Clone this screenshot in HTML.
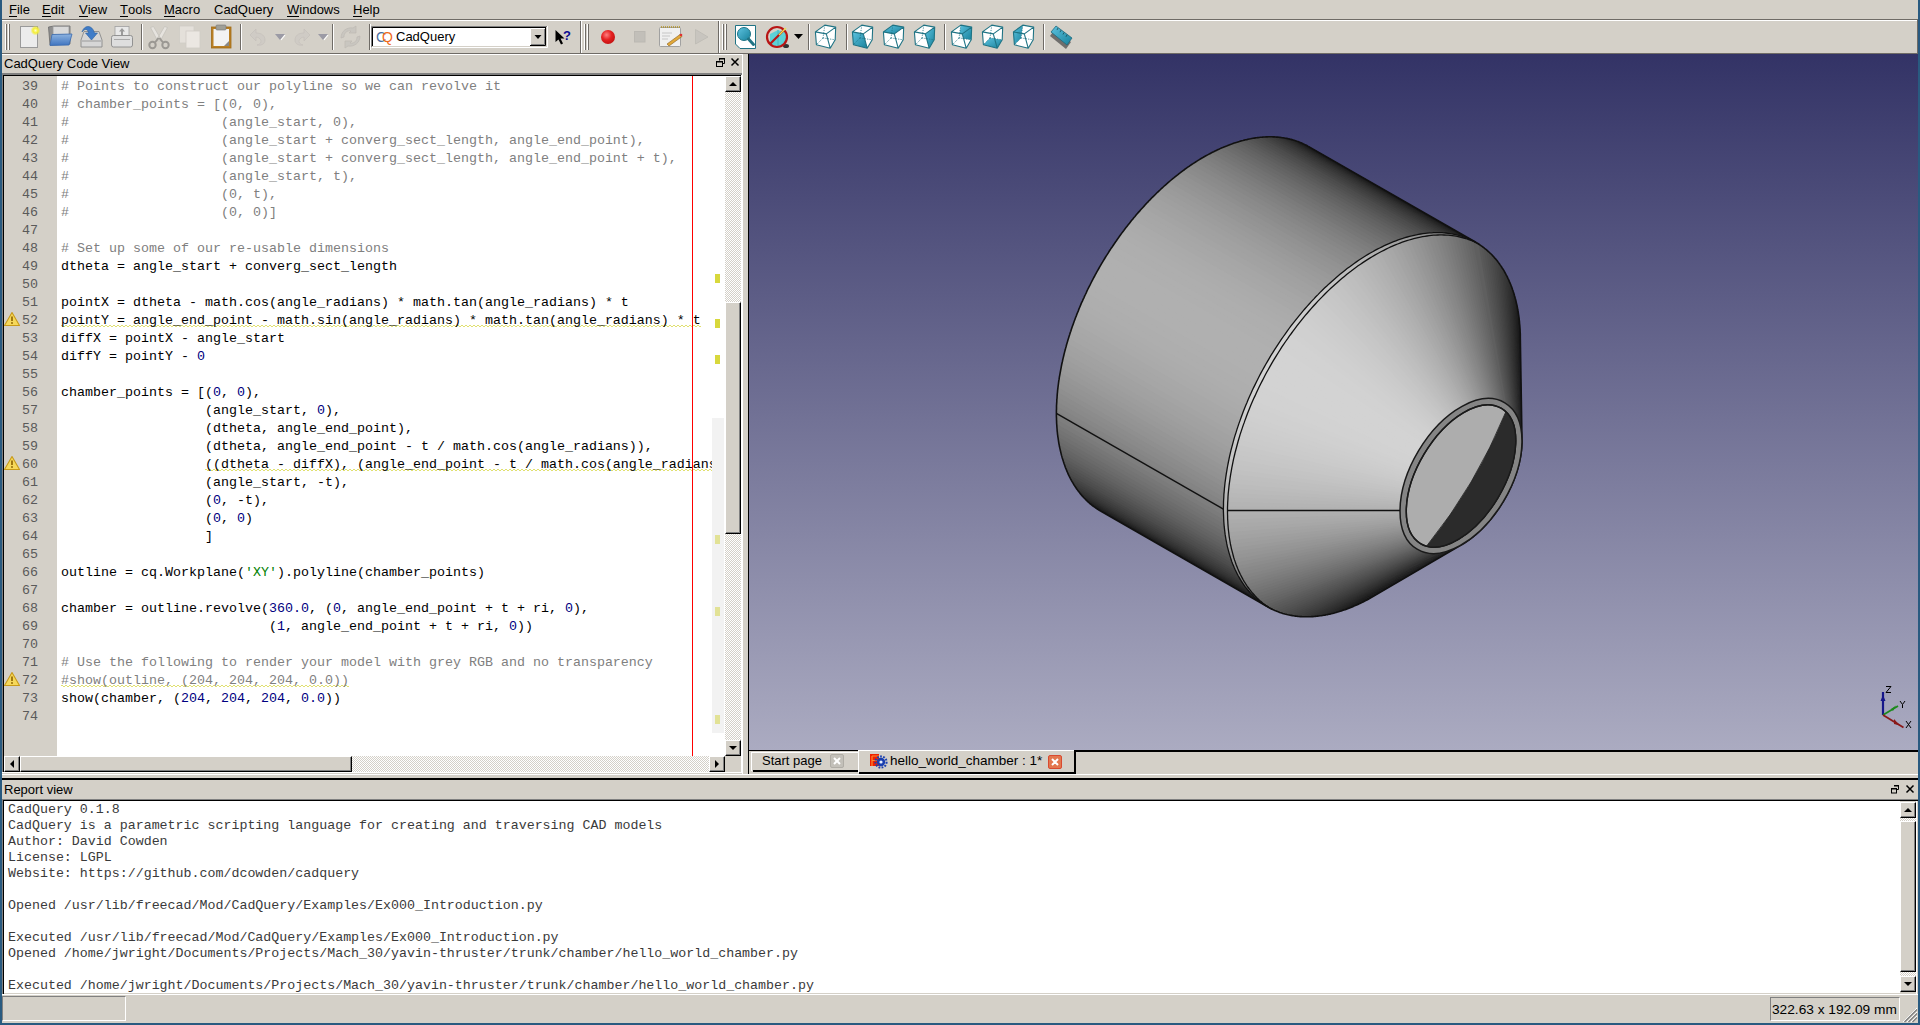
<!DOCTYPE html>
<html><head><meta charset="utf-8">
<style>
*{margin:0;padding:0;box-sizing:border-box}
html,body{width:1920px;height:1025px;overflow:hidden;background:#d4d0c8;font-family:"Liberation Sans",sans-serif;font-size:13px;color:#000;position:relative}
.a{position:absolute}
.menu span{position:absolute;top:2px;white-space:nowrap}
.menu u{text-decoration:none;display:inline-block;line-height:12px;border-bottom:1px solid #000}
.code{font-family:"Liberation Mono",monospace;font-size:13.33px;line-height:18px;white-space:pre}
.ln{position:absolute;left:4px;width:34px;text-align:right;color:#5a5a5a;font-family:"Liberation Mono",monospace;font-size:13.33px;line-height:18px}
.cm{color:#808080}.nu{color:#000080}.st{color:#008000}
.rep{font-family:"Liberation Mono",monospace;font-size:13.3px;line-height:16px;white-space:pre;color:#3a3a3a}
.checker{background-color:#d4d0c8;background-image:linear-gradient(45deg,#fff 25%,transparent 25%,transparent 75%,#fff 75%),linear-gradient(45deg,#fff 25%,transparent 25%,transparent 75%,#fff 75%);background-size:2px 2px;background-position:0 0,1px 1px}
.btn{position:absolute;background:#d4d0c8;border-top:1px solid #fff;border-left:1px solid #fff;border-right:1px solid #000;border-bottom:1px solid #000;box-shadow:inset -1px -1px 0 #808080}
</style></head><body>
<!-- window blue borders -->
<div class="a" style="left:0;top:0;width:2px;height:1025px;background:#295a80"></div>
<div class="a" style="left:1918px;top:0;width:2px;height:1025px;background:#295a80"></div>
<div class="a" style="left:0;top:1023px;width:1920px;height:2px;background:#295a80"></div>

<!-- menubar -->
<div class="menu">
<span style="left:9px"><u>F</u>ile</span>
<span style="left:42px"><u>E</u>dit</span>
<span style="left:79px"><u>V</u>iew</span>
<span style="left:120px"><u>T</u>ools</span>
<span style="left:164px"><u>M</u>acro</span>
<span style="left:214px">CadQuery</span>
<span style="left:287px"><u>W</u>indows</span>
<span style="left:353px"><u>H</u>elp</span>
</div>
<div class="a" style="left:2px;top:19px;width:1916px;height:1px;background:#6f6b66"></div>
<div class="a" style="left:2px;top:20px;width:1915px;height:1px;background:#fff"></div>
<div class="a" style="left:1917px;top:20px;width:1px;height:34px;background:#6f6b66"></div>
<div class="a" style="left:2px;top:53px;width:1916px;height:1px;background:#6f6b66"></div>

<!--TOOLBAR-->
<svg class="a" style="left:0;top:20px" width="1100" height="34" viewBox="0 20 1100 34">
<defs>
<linearGradient id="tealg" x1="0" y1="0" x2="1" y2="1"><stop offset="0" stop-color="#5ec3e0"/><stop offset="1" stop-color="#17819b"/></linearGradient>
<linearGradient id="blueg" x1="0" y1="0" x2="0" y2="1"><stop offset="0" stop-color="#8db3e0"/><stop offset="1" stop-color="#3f74c0"/></linearGradient>
<radialGradient id="redg" cx="0.4" cy="0.35" r="0.7"><stop offset="0" stop-color="#ff8080"/><stop offset="0.5" stop-color="#e52222"/><stop offset="1" stop-color="#c01010"/></radialGradient>
<radialGradient id="yelg"><stop offset="0" stop-color="#ffffc0"/><stop offset="0.5" stop-color="#f4ee30"/><stop offset="1" stop-color="#f4ee30" stop-opacity="0"/></radialGradient>
</defs>
<!-- handles -->
<g fill="none" stroke-width="1">
<path d="M5.5,24 V50 M8.5,24 V50" stroke="#fff"/><path d="M6.5,24 V50 M9.5,24 V50" stroke="#6f6b66"/>
<path d="M584.5,24 V50 M587.5,24 V50" stroke="#fff"/><path d="M585.5,24 V50 M588.5,24 V50" stroke="#6f6b66"/>
<path d="M722.5,24 V50 M725.5,24 V50" stroke="#fff"/><path d="M723.5,24 V50 M726.5,24 V50" stroke="#6f6b66"/>
</g>
<!-- separators -->
<g stroke-width="1">
<path d="M141.5,24 V50 M240.5,24 V50 M332.5,24 V50 M369.5,24 V50 M808.5,24 V50 M846.5,24 V50 M944.5,24 V50 M1043.5,24 V50" stroke="#6f6b66"/>
<path d="M142.5,24 V50 M241.5,24 V50 M333.5,24 V50 M370.5,24 V50 M809.5,24 V50 M847.5,24 V50 M945.5,24 V50 M1044.5,24 V50" stroke="#fff"/>
</g>
<!-- toolbar breaks -->
<path d="M580.5,21 V53 M718.5,21 V53" stroke="#6f6b66"/><path d="M581.5,21 V53 M719.5,21 V53" stroke="#fff"/>
<!-- new -->
<rect x="20.5" y="26.5" width="17" height="21" fill="#ececec" stroke="#9a9a9a"/>
<circle cx="35.5" cy="30.5" r="5" fill="url(#yelg)"/>
<!-- open -->
<path d="M48.5,27 L54,26 L70,26 L70,44 L50,45 Z" fill="#8f8f8f" stroke="#6a6a6a" stroke-width="0.8"/>
<rect x="53" y="26.5" width="16" height="8" fill="#d9d9d9" stroke="#9a9a9a" stroke-width="0.8"/>
<path d="M52,34.5 L72,34 L69,45 L50,45.5 Z" fill="url(#blueg)" stroke="#3a6bb0" stroke-width="0.8"/>
<!-- save -->
<path d="M81,40 L84,31.5 L99,31.5 L102,40 V47 H81 Z" fill="#d6d6d6" stroke="#8a8a8a" stroke-width="0.9"/>
<path d="M82,41 H101" stroke="#9a9a9a"/>
<path d="M82,32 C84,25 92,24 94.5,33 L97.5,33 L91.5,40 L85.5,33 L88.5,33 C88,29 85,28 82,32 Z" fill="#3f7cc8" stroke="#2c5f9e" stroke-width="0.6"/>
<!-- print/export -->
<rect x="115" y="26.5" width="14" height="10" fill="#e8e8e8" stroke="#a0a0a0" stroke-width="0.8"/>
<path d="M122,28 L125,31.5 H123 V35 H121 V31.5 H119 Z" fill="#9a9a9a"/>
<rect x="111.5" y="35.5" width="21" height="11.5" rx="2" fill="#dedede" stroke="#8a8a8a" stroke-width="0.9"/>
<path d="M114,39.5 H130" stroke="#a8a8a8"/>
<!-- cut (disabled) -->
<path d="M150.5,27.5 L153.5,26.5 L160.5,38.5 L158,41.5 Z M167.5,27.5 L164.5,26.5 L157.5,38.5 L160,41.5 Z" fill="#e6e3de" stroke="#c4c1bb" stroke-width="0.8"/>
<g stroke="#9b9893" fill="none" stroke-width="2"><circle cx="152.5" cy="45" r="3.2"/><circle cx="165.5" cy="45" r="3.2"/><path d="M155,42.5 L158.5,38 M163,42.5 L159.5,38"/></g>
<!-- copy (disabled) -->
<rect x="179.5" y="26" width="14.5" height="17" fill="#e4e0da" stroke="#d0ccc6" stroke-width="0.8"/>
<rect x="186" y="31" width="14" height="17" fill="#ebe7e2" stroke="#d0ccc6" stroke-width="0.8"/>
<!-- paste -->
<rect x="211.5" y="27" width="19.5" height="21" fill="#b97f23" stroke="#a06a15" stroke-width="0.8"/>
<rect x="213.5" y="29" width="15.5" height="17" fill="#f3f3f3"/>
<rect x="216" y="25" width="10" height="5" rx="1" fill="#9f9f98" stroke="#777" stroke-width="0.6"/>
<path d="M224,46 L229,41 V46 Z" fill="#888"/>
<!-- undo/redo disabled -->
<path d="M250,35 L256,29 V33 C262,33 265,36 265,40 C265,44 261,46 257,45 C261,44 262,41 260,39 C259,37.5 257,37 256,37 V41 Z" fill="#cfcbc5" stroke="#c2beb8" stroke-width="0.6"/>
<path d="M275,34 H285 L280,40 Z" fill="#9b9aa5"/><path d="M281,40 L285,35" stroke="#fff" stroke-width="1.2"/>
<path d="M310,35 L304,29 V33 C298,33 295,36 295,40 C295,44 299,46 303,45 C299,44 298,41 300,39 C301,37.5 303,37 304,37 V41 Z" fill="#cfcbc5" stroke="#c2beb8" stroke-width="0.6"/>
<path d="M318,34 H328 L323,40 Z" fill="#9b9aa5"/><path d="M324,40 L328,35" stroke="#fff" stroke-width="1.2"/>
<!-- refresh disabled -->
<path d="M341,38 C341,31 347,27 353,28 L356,26 V33 H349 L351,31 C347,30 344,33 344,37 Z M360,36 C360,43 354,47 348,46 L345,48 V41 H352 L350,43 C354,44 357,41 357,37 Z" fill="#c9c6c0" stroke="#bdb9b3" stroke-width="0.7"/>
<!-- combo -->
<path d="M371.5,47 V26.5 H547" stroke="#808080" fill="none"/>
<path d="M372.5,46 V27.5 H546" stroke="#000" fill="none"/>
<path d="M372,47.5 H547.5 V26" stroke="#fff" fill="none"/>
<rect x="373" y="28" width="173" height="18" fill="#fff"/>
<rect x="530" y="28" width="16" height="18" fill="#d4d0c8"/>
<path d="M530.5,46 V28.5 H545" stroke="#fff" fill="none"/>
<path d="M530,45.5 H545.5 V28" stroke="#000" fill="none"/>
<path d="M531,44.5 H544.5 V29" stroke="#808080" fill="none"/>
<path d="M534.5,35 H541.5 L538,39 Z" fill="#000"/>
<text x="376" y="42" font-family="Liberation Sans" font-size="14" fill="#4d6fa0">C</text>
<text x="382" y="42" font-family="Liberation Sans" font-size="14" fill="#f06a1a">Q</text>
<!-- whats this -->
<path d="M555.5,30 V42 L558.5,39.5 L561,44.5 L563,43.5 L560.5,38.5 L564.5,38.5 Z" fill="#000"/>
<text x="563" y="40" font-family="Liberation Sans" font-weight="bold" font-size="13" fill="#0a0a90">?</text>
<!-- record -->
<circle cx="608" cy="37" r="7" fill="url(#redg)"/>
<!-- stop disabled -->
<rect x="634.5" y="31.5" width="10.5" height="10.5" fill="#c2bfb9" stroke="#bbb8b2"/>
<!-- macro edit -->
<rect x="659.5" y="27.5" width="21" height="19" rx="1" fill="#f0f0f0" stroke="#9a9a9a" stroke-width="0.9"/>
<path d="M661,27 H680" stroke="#b09020" stroke-width="1.5" stroke-dasharray="1,1"/>
<path d="M662,33 H672 M662,36 H670 M662,39 H668" stroke="#bbb" stroke-width="0.8"/>
<path d="M667,44 L680,34.5 L682,36.5 L669,46 Z" fill="#e2a93a" stroke="#8a6020" stroke-width="0.6"/>
<circle cx="681" cy="35" r="1.3" fill="#e03030"/>
<!-- play disabled -->
<path d="M695.5,29.5 L708,37 L695.5,44 Z" fill="#c8c5bf" stroke="#bdbab4" stroke-width="0.8"/>
<!-- fit all -->
<path d="M735.5,25.5 H755.5 V48.5 H740 L735.5,44 Z" fill="#fff" stroke="#1f7384" stroke-width="1"/>
<circle cx="744" cy="34" r="6.5" fill="url(#tealg)" stroke="#1f7384" stroke-width="1"/>
<path d="M748.5,39 L753.5,44.5" stroke="#1f7384" stroke-width="3" stroke-linecap="round"/>
<!-- draw style -->
<path d="M770,34 L778,30 L786,33 V44 L778,47 L770,44 Z" fill="#4fd0d8" opacity="0.9"/>
<path d="M778,30 V47" stroke="#3ab0b8" stroke-width="0.8"/>
<ellipse cx="786" cy="46" rx="3" ry="2" fill="#333"/>
<circle cx="777" cy="37" r="10" fill="none" stroke="#b81515" stroke-width="2.2"/>
<path d="M770,44 L784,30" stroke="#b81515" stroke-width="2.2"/>
<path d="M779,35 L786,28" stroke="#f0e050" stroke-width="1.4"/>
<path d="M794,34 H803 L798.5,39 Z" fill="#000"/>
<!-- cubes -->
<g transform="translate(815,25)"><path d="M0.4,6.9 L9.8,0.1 L20.7,2.1 L11.3,8.9 Z M0.4,6.9 L1.4,19.8 L15.2,23.2 L11.3,8.9 Z M11.3,8.9 L20.7,2.1 L20.2,14.8 L15.2,23.2 Z" fill="#fff"/><g fill="none" stroke="#1f7384" stroke-width="1.1" stroke-linejoin="round">
 <path d="M0.4,6.9 L9.8,0.1 L20.7,2.1 L11.3,8.9 Z M0.4,6.9 L1.4,19.8 L15.2,23.2 L11.3,8.9 M15.2,23.2 L20.2,14.8 L20.7,2.1"/>
 <path d="M9.8,0.1 L8,13 M8,13 L1.4,19.8 M8,13 L20.2,14.8" stroke-dasharray="1.2,1.2" stroke-width="0.8"/>
</g></g>
<g transform="translate(852,25)"><path d="M0.4,6.9 L9.8,0.1 L20.7,2.1 L11.3,8.9 Z M11.3,8.9 L20.7,2.1 L20.2,14.8 L15.2,23.2 Z" fill="#fff"/><path d="M0.4,6.9 L1.4,19.8 L15.2,23.2 L11.3,8.9 Z" fill="url(#tealg)"/><g fill="none" stroke="#1f7384" stroke-width="1.1" stroke-linejoin="round">
 <path d="M0.4,6.9 L9.8,0.1 L20.7,2.1 L11.3,8.9 Z M0.4,6.9 L1.4,19.8 L15.2,23.2 L11.3,8.9 M15.2,23.2 L20.2,14.8 L20.7,2.1"/>
 <path d="M9.8,0.1 L8,13 M8,13 L1.4,19.8 M8,13 L20.2,14.8" stroke-dasharray="1.2,1.2" stroke-width="0.8"/>
</g></g>
<g transform="translate(883,25)"><path d="M0.4,6.9 L1.4,19.8 L15.2,23.2 L11.3,8.9 Z M11.3,8.9 L20.7,2.1 L20.2,14.8 L15.2,23.2 Z" fill="#fff"/><path d="M0.4,6.9 L9.8,0.1 L20.7,2.1 L11.3,8.9 Z" fill="url(#tealg)"/><g fill="none" stroke="#1f7384" stroke-width="1.1" stroke-linejoin="round">
 <path d="M0.4,6.9 L9.8,0.1 L20.7,2.1 L11.3,8.9 Z M0.4,6.9 L1.4,19.8 L15.2,23.2 L11.3,8.9 M15.2,23.2 L20.2,14.8 L20.7,2.1"/>
 <path d="M9.8,0.1 L8,13 M8,13 L1.4,19.8 M8,13 L20.2,14.8" stroke-dasharray="1.2,1.2" stroke-width="0.8"/>
</g></g>
<g transform="translate(914,25)"><path d="M0.4,6.9 L9.8,0.1 L20.7,2.1 L11.3,8.9 Z M0.4,6.9 L1.4,19.8 L15.2,23.2 L11.3,8.9 Z" fill="#fff"/><path d="M11.3,8.9 L20.7,2.1 L20.2,14.8 L15.2,23.2 Z" fill="url(#tealg)"/><g fill="none" stroke="#1f7384" stroke-width="1.1" stroke-linejoin="round">
 <path d="M0.4,6.9 L9.8,0.1 L20.7,2.1 L11.3,8.9 Z M0.4,6.9 L1.4,19.8 L15.2,23.2 L11.3,8.9 M15.2,23.2 L20.2,14.8 L20.7,2.1"/>
 <path d="M9.8,0.1 L8,13 M8,13 L1.4,19.8 M8,13 L20.2,14.8" stroke-dasharray="1.2,1.2" stroke-width="0.8"/>
</g></g>
<g transform="translate(951,25)"><path d="M0.4,6.9 L9.8,0.1 L20.7,2.1 L11.3,8.9 Z M0.4,6.9 L1.4,19.8 L15.2,23.2 L11.3,8.9 Z M11.3,8.9 L20.7,2.1 L20.2,14.8 L15.2,23.2 Z" fill="#fff"/><path d="M9.8,0.1 L20.7,2.1 L20.2,14.8 L8,13 Z" fill="url(#tealg)"/><path d="M0.4,6.9 L1.4,19.8 L15.2,23.2 L11.3,8.9 Z" fill="#fff" opacity="0.85"/><g fill="none" stroke="#1f7384" stroke-width="1.1" stroke-linejoin="round">
 <path d="M0.4,6.9 L9.8,0.1 L20.7,2.1 L11.3,8.9 Z M0.4,6.9 L1.4,19.8 L15.2,23.2 L11.3,8.9 M15.2,23.2 L20.2,14.8 L20.7,2.1"/>
 <path d="M9.8,0.1 L8,13 M8,13 L1.4,19.8 M8,13 L20.2,14.8" stroke-dasharray="1.2,1.2" stroke-width="0.8"/>
</g></g>
<g transform="translate(982,25)"><path d="M0.4,6.9 L9.8,0.1 L20.7,2.1 L11.3,8.9 Z M0.4,6.9 L1.4,19.8 L15.2,23.2 L11.3,8.9 Z M11.3,8.9 L20.7,2.1 L20.2,14.8 L15.2,23.2 Z" fill="#fff"/><path d="M1.4,19.8 L8,13 L20.2,14.8 L15.2,23.2 Z" fill="url(#tealg)"/><g fill="none" stroke="#1f7384" stroke-width="1.1" stroke-linejoin="round">
 <path d="M0.4,6.9 L9.8,0.1 L20.7,2.1 L11.3,8.9 Z M0.4,6.9 L1.4,19.8 L15.2,23.2 L11.3,8.9 M15.2,23.2 L20.2,14.8 L20.7,2.1"/>
 <path d="M9.8,0.1 L8,13 M8,13 L1.4,19.8 M8,13 L20.2,14.8" stroke-dasharray="1.2,1.2" stroke-width="0.8"/>
</g></g>
<g transform="translate(1013,25)"><path d="M0.4,6.9 L9.8,0.1 L20.7,2.1 L11.3,8.9 Z M0.4,6.9 L1.4,19.8 L15.2,23.2 L11.3,8.9 Z M11.3,8.9 L20.7,2.1 L20.2,14.8 L15.2,23.2 Z" fill="#fff"/><path d="M0.4,6.9 L9.8,0.1 L8,13 L1.4,19.8 Z" fill="url(#tealg)"/><g fill="none" stroke="#1f7384" stroke-width="1.1" stroke-linejoin="round">
 <path d="M0.4,6.9 L9.8,0.1 L20.7,2.1 L11.3,8.9 Z M0.4,6.9 L1.4,19.8 L15.2,23.2 L11.3,8.9 M15.2,23.2 L20.2,14.8 L20.7,2.1"/>
 <path d="M9.8,0.1 L8,13 M8,13 L1.4,19.8 M8,13 L20.2,14.8" stroke-dasharray="1.2,1.2" stroke-width="0.8"/>
</g></g>
<!-- ruler -->
<path d="M1051,34 L1056,27 L1072,40 L1067,47 Z" fill="#555" transform="translate(-1,2)" opacity="0.8"/>
<path d="M1051,32 L1056,26 L1072,38 L1067,45 Z" fill="url(#tealg)" stroke="#1f6a7c" stroke-width="0.8"/>
<path d="M1058,28 L1057,30 M1061,30.2 L1060,32.2 M1064,32.5 L1063,34.5 M1067,34.8 L1066,36.8" stroke="#1a4a55" stroke-width="0.8"/>
</svg>
<!--/TOOLBAR-->
<div id="combotxt" class="a" style="left:396px;top:29px;white-space:nowrap;font-size:13px">CadQuery</div>
<!-- dock: code view -->
<div class="a" style="left:2px;top:54px;width:741px;height:1px;background:#fff"></div><div class="a" style="left:742px;top:54px;width:1px;height:720px;background:#fff"></div>
<div class="a" style="left:4px;top:56px;white-space:nowrap">CadQuery Code View</div>
<div class="a" style="left:2px;top:73px;width:740px;height:2px;background:#808080"></div>
<div class="a" style="left:3px;top:75px;width:739px;height:1px;background:#000"></div>
<div class="a" style="left:2px;top:75px;width:1px;height:698px;background:#808080"></div>
<div class="a" style="left:3px;top:75px;width:1px;height:697px;background:#000"></div>
<!-- gutter -->
<div class="a" style="left:4px;top:76px;width:53px;height:680px;background:#d4d0c8"></div>
<div class="a" style="left:57px;top:76px;width:668px;height:680px;background:#fff"></div>

<!-- wavy underlines -->
<svg class="a" style="left:0;top:0" width="750" height="780" viewBox="0 0 750 780">
<path d="M61.0,326.0 Q62.0,324.0 63.0,326.0 Q64.0,328.0 65.0,326.0 Q66.0,324.0 67.0,326.0 Q68.0,328.0 69.0,326.0 Q70.0,324.0 71.0,326.0 Q72.0,328.0 73.0,326.0 Q74.0,324.0 75.0,326.0 Q76.0,328.0 77.0,326.0 Q78.0,324.0 79.0,326.0 Q80.0,328.0 81.0,326.0 Q82.0,324.0 83.0,326.0 Q84.0,328.0 85.0,326.0 Q86.0,324.0 87.0,326.0 Q88.0,328.0 89.0,326.0 Q90.0,324.0 91.0,326.0 Q92.0,328.0 93.0,326.0 Q94.0,324.0 95.0,326.0 Q96.0,328.0 97.0,326.0 Q98.0,324.0 99.0,326.0 Q100.0,328.0 101.0,326.0 Q102.0,324.0 103.0,326.0 Q104.0,328.0 105.0,326.0 Q106.0,324.0 107.0,326.0 Q108.0,328.0 109.0,326.0 Q110.0,324.0 111.0,326.0 Q112.0,328.0 113.0,326.0 Q114.0,324.0 115.0,326.0 Q116.0,328.0 117.0,326.0 Q118.0,324.0 119.0,326.0 Q120.0,328.0 121.0,326.0 Q122.0,324.0 123.0,326.0 Q124.0,328.0 125.0,326.0 Q126.0,324.0 127.0,326.0 Q128.0,328.0 129.0,326.0 Q130.0,324.0 131.0,326.0 Q132.0,328.0 133.0,326.0 Q134.0,324.0 135.0,326.0 Q136.0,328.0 137.0,326.0 Q138.0,324.0 139.0,326.0 Q140.0,328.0 141.0,326.0 Q142.0,324.0 143.0,326.0 Q144.0,328.0 145.0,326.0 Q146.0,324.0 147.0,326.0 Q148.0,328.0 149.0,326.0 Q150.0,324.0 151.0,326.0 Q152.0,328.0 153.0,326.0 Q154.0,324.0 155.0,326.0 Q156.0,328.0 157.0,326.0 Q158.0,324.0 159.0,326.0 Q160.0,328.0 161.0,326.0 Q162.0,324.0 163.0,326.0 Q164.0,328.0 165.0,326.0 Q166.0,324.0 167.0,326.0 Q168.0,328.0 169.0,326.0 Q170.0,324.0 171.0,326.0 Q172.0,328.0 173.0,326.0 Q174.0,324.0 175.0,326.0 Q176.0,328.0 177.0,326.0 Q178.0,324.0 179.0,326.0 Q180.0,328.0 181.0,326.0 Q182.0,324.0 183.0,326.0 Q184.0,328.0 185.0,326.0 Q186.0,324.0 187.0,326.0 Q188.0,328.0 189.0,326.0 Q190.0,324.0 191.0,326.0 Q192.0,328.0 193.0,326.0 Q194.0,324.0 195.0,326.0 Q196.0,328.0 197.0,326.0 Q198.0,324.0 199.0,326.0 Q200.0,328.0 201.0,326.0 Q202.0,324.0 203.0,326.0 Q204.0,328.0 205.0,326.0 Q206.0,324.0 207.0,326.0 Q208.0,328.0 209.0,326.0 Q210.0,324.0 211.0,326.0 Q212.0,328.0 213.0,326.0 Q214.0,324.0 215.0,326.0 Q216.0,328.0 217.0,326.0 Q218.0,324.0 219.0,326.0 Q220.0,328.0 221.0,326.0 Q222.0,324.0 223.0,326.0 Q224.0,328.0 225.0,326.0 Q226.0,324.0 227.0,326.0 Q228.0,328.0 229.0,326.0 Q230.0,324.0 231.0,326.0 Q232.0,328.0 233.0,326.0 Q234.0,324.0 235.0,326.0 Q236.0,328.0 237.0,326.0 Q238.0,324.0 239.0,326.0 Q240.0,328.0 241.0,326.0 Q242.0,324.0 243.0,326.0 Q244.0,328.0 245.0,326.0 Q246.0,324.0 247.0,326.0 Q248.0,328.0 249.0,326.0 Q250.0,324.0 251.0,326.0 Q252.0,328.0 253.0,326.0 Q254.0,324.0 255.0,326.0 Q256.0,328.0 257.0,326.0 Q258.0,324.0 259.0,326.0 Q260.0,328.0 261.0,326.0 Q262.0,324.0 263.0,326.0 Q264.0,328.0 265.0,326.0 Q266.0,324.0 267.0,326.0 Q268.0,328.0 269.0,326.0 Q270.0,324.0 271.0,326.0 Q272.0,328.0 273.0,326.0 Q274.0,324.0 275.0,326.0 Q276.0,328.0 277.0,326.0 Q278.0,324.0 279.0,326.0 Q280.0,328.0 281.0,326.0 Q282.0,324.0 283.0,326.0 Q284.0,328.0 285.0,326.0 Q286.0,324.0 287.0,326.0 Q288.0,328.0 289.0,326.0 Q290.0,324.0 291.0,326.0 Q292.0,328.0 293.0,326.0 Q294.0,324.0 295.0,326.0 Q296.0,328.0 297.0,326.0 Q298.0,324.0 299.0,326.0 Q300.0,328.0 301.0,326.0 Q302.0,324.0 303.0,326.0 Q304.0,328.0 305.0,326.0 Q306.0,324.0 307.0,326.0 Q308.0,328.0 309.0,326.0 Q310.0,324.0 311.0,326.0 Q312.0,328.0 313.0,326.0 Q314.0,324.0 315.0,326.0 Q316.0,328.0 317.0,326.0 Q318.0,324.0 319.0,326.0 Q320.0,328.0 321.0,326.0 Q322.0,324.0 323.0,326.0 Q324.0,328.0 325.0,326.0 Q326.0,324.0 327.0,326.0 Q328.0,328.0 329.0,326.0 Q330.0,324.0 331.0,326.0 Q332.0,328.0 333.0,326.0 Q334.0,324.0 335.0,326.0 Q336.0,328.0 337.0,326.0 Q338.0,324.0 339.0,326.0 Q340.0,328.0 341.0,326.0 Q342.0,324.0 343.0,326.0 Q344.0,328.0 345.0,326.0 Q346.0,324.0 347.0,326.0 Q348.0,328.0 349.0,326.0 Q350.0,324.0 351.0,326.0 Q352.0,328.0 353.0,326.0 Q354.0,324.0 355.0,326.0 Q356.0,328.0 357.0,326.0 Q358.0,324.0 359.0,326.0 Q360.0,328.0 361.0,326.0 Q362.0,324.0 363.0,326.0 Q364.0,328.0 365.0,326.0 Q366.0,324.0 367.0,326.0 Q368.0,328.0 369.0,326.0 Q370.0,324.0 371.0,326.0 Q372.0,328.0 373.0,326.0 Q374.0,324.0 375.0,326.0 Q376.0,328.0 377.0,326.0 Q378.0,324.0 379.0,326.0 Q380.0,328.0 381.0,326.0 Q382.0,324.0 383.0,326.0 Q384.0,328.0 385.0,326.0 Q386.0,324.0 387.0,326.0 Q388.0,328.0 389.0,326.0 Q390.0,324.0 391.0,326.0 Q392.0,328.0 393.0,326.0 Q394.0,324.0 395.0,326.0 Q396.0,328.0 397.0,326.0 Q398.0,324.0 399.0,326.0 Q400.0,328.0 401.0,326.0 Q402.0,324.0 403.0,326.0 Q404.0,328.0 405.0,326.0 Q406.0,324.0 407.0,326.0 Q408.0,328.0 409.0,326.0 Q410.0,324.0 411.0,326.0 Q412.0,328.0 413.0,326.0 Q414.0,324.0 415.0,326.0 Q416.0,328.0 417.0,326.0 Q418.0,324.0 419.0,326.0 Q420.0,328.0 421.0,326.0 Q422.0,324.0 423.0,326.0 Q424.0,328.0 425.0,326.0 Q426.0,324.0 427.0,326.0 Q428.0,328.0 429.0,326.0 Q430.0,324.0 431.0,326.0 Q432.0,328.0 433.0,326.0 Q434.0,324.0 435.0,326.0 Q436.0,328.0 437.0,326.0 Q438.0,324.0 439.0,326.0 Q440.0,328.0 441.0,326.0 Q442.0,324.0 443.0,326.0 Q444.0,328.0 445.0,326.0 Q446.0,324.0 447.0,326.0 Q448.0,328.0 449.0,326.0 Q450.0,324.0 451.0,326.0 Q452.0,328.0 453.0,326.0 Q454.0,324.0 455.0,326.0 Q456.0,328.0 457.0,326.0 Q458.0,324.0 459.0,326.0 Q460.0,328.0 461.0,326.0 Q462.0,324.0 463.0,326.0 Q464.0,328.0 465.0,326.0 Q466.0,324.0 467.0,326.0 Q468.0,328.0 469.0,326.0 Q470.0,324.0 471.0,326.0 Q472.0,328.0 473.0,326.0 Q474.0,324.0 475.0,326.0 Q476.0,328.0 477.0,326.0 Q478.0,324.0 479.0,326.0 Q480.0,328.0 481.0,326.0 Q482.0,324.0 483.0,326.0 Q484.0,328.0 485.0,326.0 Q486.0,324.0 487.0,326.0 Q488.0,328.0 489.0,326.0 Q490.0,324.0 491.0,326.0 Q492.0,328.0 493.0,326.0 Q494.0,324.0 495.0,326.0 Q496.0,328.0 497.0,326.0 Q498.0,324.0 499.0,326.0 Q500.0,328.0 501.0,326.0 Q502.0,324.0 503.0,326.0 Q504.0,328.0 505.0,326.0 Q506.0,324.0 507.0,326.0 Q508.0,328.0 509.0,326.0 Q510.0,324.0 511.0,326.0 Q512.0,328.0 513.0,326.0 Q514.0,324.0 515.0,326.0 Q516.0,328.0 517.0,326.0 Q518.0,324.0 519.0,326.0 Q520.0,328.0 521.0,326.0 Q522.0,324.0 523.0,326.0 Q524.0,328.0 525.0,326.0 Q526.0,324.0 527.0,326.0 Q528.0,328.0 529.0,326.0 Q530.0,324.0 531.0,326.0 Q532.0,328.0 533.0,326.0 Q534.0,324.0 535.0,326.0 Q536.0,328.0 537.0,326.0 Q538.0,324.0 539.0,326.0 Q540.0,328.0 541.0,326.0 Q542.0,324.0 543.0,326.0 Q544.0,328.0 545.0,326.0 Q546.0,324.0 547.0,326.0 Q548.0,328.0 549.0,326.0 Q550.0,324.0 551.0,326.0 Q552.0,328.0 553.0,326.0 Q554.0,324.0 555.0,326.0 Q556.0,328.0 557.0,326.0 Q558.0,324.0 559.0,326.0 Q560.0,328.0 561.0,326.0 Q562.0,324.0 563.0,326.0 Q564.0,328.0 565.0,326.0 Q566.0,324.0 567.0,326.0 Q568.0,328.0 569.0,326.0 Q570.0,324.0 571.0,326.0 Q572.0,328.0 573.0,326.0 Q574.0,324.0 575.0,326.0 Q576.0,328.0 577.0,326.0 Q578.0,324.0 579.0,326.0 Q580.0,328.0 581.0,326.0 Q582.0,324.0 583.0,326.0 Q584.0,328.0 585.0,326.0 Q586.0,324.0 587.0,326.0 Q588.0,328.0 589.0,326.0 Q590.0,324.0 591.0,326.0 Q592.0,328.0 593.0,326.0 Q594.0,324.0 595.0,326.0 Q596.0,328.0 597.0,326.0 Q598.0,324.0 599.0,326.0 Q600.0,328.0 601.0,326.0 Q602.0,324.0 603.0,326.0 Q604.0,328.0 605.0,326.0 Q606.0,324.0 607.0,326.0 Q608.0,328.0 609.0,326.0 Q610.0,324.0 611.0,326.0 Q612.0,328.0 613.0,326.0 Q614.0,324.0 615.0,326.0 Q616.0,328.0 617.0,326.0 Q618.0,324.0 619.0,326.0 Q620.0,328.0 621.0,326.0 Q622.0,324.0 623.0,326.0 Q624.0,328.0 625.0,326.0 Q626.0,324.0 627.0,326.0 Q628.0,328.0 629.0,326.0 Q630.0,324.0 631.0,326.0 Q632.0,328.0 633.0,326.0 Q634.0,324.0 635.0,326.0 Q636.0,328.0 637.0,326.0 Q638.0,324.0 639.0,326.0 Q640.0,328.0 641.0,326.0 Q642.0,324.0 643.0,326.0 Q644.0,328.0 645.0,326.0 Q646.0,324.0 647.0,326.0 Q648.0,328.0 649.0,326.0 Q650.0,324.0 651.0,326.0 Q652.0,328.0 653.0,326.0 Q654.0,324.0 655.0,326.0 Q656.0,328.0 657.0,326.0 Q658.0,324.0 659.0,326.0 Q660.0,328.0 661.0,326.0 Q662.0,324.0 663.0,326.0 Q664.0,328.0 665.0,326.0 Q666.0,324.0 667.0,326.0 Q668.0,328.0 669.0,326.0 Q670.0,324.0 671.0,326.0 Q672.0,328.0 673.0,326.0 Q674.0,324.0 675.0,326.0 Q676.0,328.0 677.0,326.0 Q678.0,324.0 679.0,326.0 Q680.0,328.0 681.0,326.0 Q682.0,324.0 683.0,326.0 Q684.0,328.0 685.0,326.0 Q686.0,324.0 687.0,326.0 Q688.0,328.0 689.0,326.0 Q690.0,324.0 691.0,326.0 Q692.0,328.0 693.0,326.0 Q694.0,324.0 695.0,326.0 Q696.0,328.0 697.0,326.0 Q698.0,324.0 699.0,326.0 Q700.0,328.0 701.0,326.0" fill="none" stroke="#e0e070" stroke-width="1"/>
<path d="M205.0,470.0 Q206.0,468.0 207.0,470.0 Q208.0,472.0 209.0,470.0 Q210.0,468.0 211.0,470.0 Q212.0,472.0 213.0,470.0 Q214.0,468.0 215.0,470.0 Q216.0,472.0 217.0,470.0 Q218.0,468.0 219.0,470.0 Q220.0,472.0 221.0,470.0 Q222.0,468.0 223.0,470.0 Q224.0,472.0 225.0,470.0 Q226.0,468.0 227.0,470.0 Q228.0,472.0 229.0,470.0 Q230.0,468.0 231.0,470.0 Q232.0,472.0 233.0,470.0 Q234.0,468.0 235.0,470.0 Q236.0,472.0 237.0,470.0 Q238.0,468.0 239.0,470.0 Q240.0,472.0 241.0,470.0 Q242.0,468.0 243.0,470.0 Q244.0,472.0 245.0,470.0 Q246.0,468.0 247.0,470.0 Q248.0,472.0 249.0,470.0 Q250.0,468.0 251.0,470.0 Q252.0,472.0 253.0,470.0 Q254.0,468.0 255.0,470.0 Q256.0,472.0 257.0,470.0 Q258.0,468.0 259.0,470.0 Q260.0,472.0 261.0,470.0 Q262.0,468.0 263.0,470.0 Q264.0,472.0 265.0,470.0 Q266.0,468.0 267.0,470.0 Q268.0,472.0 269.0,470.0 Q270.0,468.0 271.0,470.0 Q272.0,472.0 273.0,470.0 Q274.0,468.0 275.0,470.0 Q276.0,472.0 277.0,470.0 Q278.0,468.0 279.0,470.0 Q280.0,472.0 281.0,470.0 Q282.0,468.0 283.0,470.0 Q284.0,472.0 285.0,470.0 Q286.0,468.0 287.0,470.0 Q288.0,472.0 289.0,470.0 Q290.0,468.0 291.0,470.0 Q292.0,472.0 293.0,470.0 Q294.0,468.0 295.0,470.0 Q296.0,472.0 297.0,470.0 Q298.0,468.0 299.0,470.0 Q300.0,472.0 301.0,470.0 Q302.0,468.0 303.0,470.0 Q304.0,472.0 305.0,470.0 Q306.0,468.0 307.0,470.0 Q308.0,472.0 309.0,470.0 Q310.0,468.0 311.0,470.0 Q312.0,472.0 313.0,470.0 Q314.0,468.0 315.0,470.0 Q316.0,472.0 317.0,470.0 Q318.0,468.0 319.0,470.0 Q320.0,472.0 321.0,470.0 Q322.0,468.0 323.0,470.0 Q324.0,472.0 325.0,470.0 Q326.0,468.0 327.0,470.0 Q328.0,472.0 329.0,470.0 Q330.0,468.0 331.0,470.0 Q332.0,472.0 333.0,470.0 Q334.0,468.0 335.0,470.0 Q336.0,472.0 337.0,470.0 Q338.0,468.0 339.0,470.0 Q340.0,472.0 341.0,470.0 Q342.0,468.0 343.0,470.0 Q344.0,472.0 345.0,470.0 Q346.0,468.0 347.0,470.0 Q348.0,472.0 349.0,470.0 Q350.0,468.0 351.0,470.0 Q352.0,472.0 353.0,470.0 Q354.0,468.0 355.0,470.0 Q356.0,472.0 357.0,470.0 Q358.0,468.0 359.0,470.0 Q360.0,472.0 361.0,470.0 Q362.0,468.0 363.0,470.0 Q364.0,472.0 365.0,470.0 Q366.0,468.0 367.0,470.0 Q368.0,472.0 369.0,470.0 Q370.0,468.0 371.0,470.0 Q372.0,472.0 373.0,470.0 Q374.0,468.0 375.0,470.0 Q376.0,472.0 377.0,470.0 Q378.0,468.0 379.0,470.0 Q380.0,472.0 381.0,470.0 Q382.0,468.0 383.0,470.0 Q384.0,472.0 385.0,470.0 Q386.0,468.0 387.0,470.0 Q388.0,472.0 389.0,470.0 Q390.0,468.0 391.0,470.0 Q392.0,472.0 393.0,470.0 Q394.0,468.0 395.0,470.0 Q396.0,472.0 397.0,470.0 Q398.0,468.0 399.0,470.0 Q400.0,472.0 401.0,470.0 Q402.0,468.0 403.0,470.0 Q404.0,472.0 405.0,470.0 Q406.0,468.0 407.0,470.0 Q408.0,472.0 409.0,470.0 Q410.0,468.0 411.0,470.0 Q412.0,472.0 413.0,470.0 Q414.0,468.0 415.0,470.0 Q416.0,472.0 417.0,470.0 Q418.0,468.0 419.0,470.0 Q420.0,472.0 421.0,470.0 Q422.0,468.0 423.0,470.0 Q424.0,472.0 425.0,470.0 Q426.0,468.0 427.0,470.0 Q428.0,472.0 429.0,470.0 Q430.0,468.0 431.0,470.0 Q432.0,472.0 433.0,470.0 Q434.0,468.0 435.0,470.0 Q436.0,472.0 437.0,470.0 Q438.0,468.0 439.0,470.0 Q440.0,472.0 441.0,470.0 Q442.0,468.0 443.0,470.0 Q444.0,472.0 445.0,470.0 Q446.0,468.0 447.0,470.0 Q448.0,472.0 449.0,470.0 Q450.0,468.0 451.0,470.0 Q452.0,472.0 453.0,470.0 Q454.0,468.0 455.0,470.0 Q456.0,472.0 457.0,470.0 Q458.0,468.0 459.0,470.0 Q460.0,472.0 461.0,470.0 Q462.0,468.0 463.0,470.0 Q464.0,472.0 465.0,470.0 Q466.0,468.0 467.0,470.0 Q468.0,472.0 469.0,470.0 Q470.0,468.0 471.0,470.0 Q472.0,472.0 473.0,470.0 Q474.0,468.0 475.0,470.0 Q476.0,472.0 477.0,470.0 Q478.0,468.0 479.0,470.0 Q480.0,472.0 481.0,470.0 Q482.0,468.0 483.0,470.0 Q484.0,472.0 485.0,470.0 Q486.0,468.0 487.0,470.0 Q488.0,472.0 489.0,470.0 Q490.0,468.0 491.0,470.0 Q492.0,472.0 493.0,470.0 Q494.0,468.0 495.0,470.0 Q496.0,472.0 497.0,470.0 Q498.0,468.0 499.0,470.0 Q500.0,472.0 501.0,470.0 Q502.0,468.0 503.0,470.0 Q504.0,472.0 505.0,470.0 Q506.0,468.0 507.0,470.0 Q508.0,472.0 509.0,470.0 Q510.0,468.0 511.0,470.0 Q512.0,472.0 513.0,470.0 Q514.0,468.0 515.0,470.0 Q516.0,472.0 517.0,470.0 Q518.0,468.0 519.0,470.0 Q520.0,472.0 521.0,470.0 Q522.0,468.0 523.0,470.0 Q524.0,472.0 525.0,470.0 Q526.0,468.0 527.0,470.0 Q528.0,472.0 529.0,470.0 Q530.0,468.0 531.0,470.0 Q532.0,472.0 533.0,470.0 Q534.0,468.0 535.0,470.0 Q536.0,472.0 537.0,470.0 Q538.0,468.0 539.0,470.0 Q540.0,472.0 541.0,470.0 Q542.0,468.0 543.0,470.0 Q544.0,472.0 545.0,470.0 Q546.0,468.0 547.0,470.0 Q548.0,472.0 549.0,470.0 Q550.0,468.0 551.0,470.0 Q552.0,472.0 553.0,470.0 Q554.0,468.0 555.0,470.0 Q556.0,472.0 557.0,470.0 Q558.0,468.0 559.0,470.0 Q560.0,472.0 561.0,470.0 Q562.0,468.0 563.0,470.0 Q564.0,472.0 565.0,470.0 Q566.0,468.0 567.0,470.0 Q568.0,472.0 569.0,470.0 Q570.0,468.0 571.0,470.0 Q572.0,472.0 573.0,470.0 Q574.0,468.0 575.0,470.0 Q576.0,472.0 577.0,470.0 Q578.0,468.0 579.0,470.0 Q580.0,472.0 581.0,470.0 Q582.0,468.0 583.0,470.0 Q584.0,472.0 585.0,470.0 Q586.0,468.0 587.0,470.0 Q588.0,472.0 589.0,470.0 Q590.0,468.0 591.0,470.0 Q592.0,472.0 593.0,470.0 Q594.0,468.0 595.0,470.0 Q596.0,472.0 597.0,470.0 Q598.0,468.0 599.0,470.0 Q600.0,472.0 601.0,470.0 Q602.0,468.0 603.0,470.0 Q604.0,472.0 605.0,470.0 Q606.0,468.0 607.0,470.0 Q608.0,472.0 609.0,470.0 Q610.0,468.0 611.0,470.0 Q612.0,472.0 613.0,470.0 Q614.0,468.0 615.0,470.0 Q616.0,472.0 617.0,470.0 Q618.0,468.0 619.0,470.0 Q620.0,472.0 621.0,470.0 Q622.0,468.0 623.0,470.0 Q624.0,472.0 625.0,470.0 Q626.0,468.0 627.0,470.0 Q628.0,472.0 629.0,470.0 Q630.0,468.0 631.0,470.0 Q632.0,472.0 633.0,470.0 Q634.0,468.0 635.0,470.0 Q636.0,472.0 637.0,470.0 Q638.0,468.0 639.0,470.0 Q640.0,472.0 641.0,470.0 Q642.0,468.0 643.0,470.0 Q644.0,472.0 645.0,470.0 Q646.0,468.0 647.0,470.0 Q648.0,472.0 649.0,470.0 Q650.0,468.0 651.0,470.0 Q652.0,472.0 653.0,470.0 Q654.0,468.0 655.0,470.0 Q656.0,472.0 657.0,470.0 Q658.0,468.0 659.0,470.0 Q660.0,472.0 661.0,470.0 Q662.0,468.0 663.0,470.0 Q664.0,472.0 665.0,470.0 Q666.0,468.0 667.0,470.0 Q668.0,472.0 669.0,470.0 Q670.0,468.0 671.0,470.0 Q672.0,472.0 673.0,470.0 Q674.0,468.0 675.0,470.0 Q676.0,472.0 677.0,470.0 Q678.0,468.0 679.0,470.0 Q680.0,472.0 681.0,470.0 Q682.0,468.0 683.0,470.0 Q684.0,472.0 685.0,470.0 Q686.0,468.0 687.0,470.0 Q688.0,472.0 689.0,470.0 Q690.0,468.0 691.0,470.0 Q692.0,472.0 693.0,470.0 Q694.0,468.0 695.0,470.0 Q696.0,472.0 697.0,470.0 Q698.0,468.0 699.0,470.0 Q700.0,472.0 701.0,470.0 Q702.0,468.0 703.0,470.0 Q704.0,472.0 705.0,470.0 Q706.0,468.0 707.0,470.0 Q708.0,472.0 709.0,470.0 Q710.0,468.0 711.0,470.0 Q712.0,472.0 713.0,470.0" fill="none" stroke="#e0e070" stroke-width="1"/>
<path d="M61.0,686.0 Q62.0,684.0 63.0,686.0 Q64.0,688.0 65.0,686.0 Q66.0,684.0 67.0,686.0 Q68.0,688.0 69.0,686.0 Q70.0,684.0 71.0,686.0 Q72.0,688.0 73.0,686.0 Q74.0,684.0 75.0,686.0 Q76.0,688.0 77.0,686.0 Q78.0,684.0 79.0,686.0 Q80.0,688.0 81.0,686.0 Q82.0,684.0 83.0,686.0 Q84.0,688.0 85.0,686.0 Q86.0,684.0 87.0,686.0 Q88.0,688.0 89.0,686.0 Q90.0,684.0 91.0,686.0 Q92.0,688.0 93.0,686.0 Q94.0,684.0 95.0,686.0 Q96.0,688.0 97.0,686.0 Q98.0,684.0 99.0,686.0 Q100.0,688.0 101.0,686.0 Q102.0,684.0 103.0,686.0 Q104.0,688.0 105.0,686.0 Q106.0,684.0 107.0,686.0 Q108.0,688.0 109.0,686.0 Q110.0,684.0 111.0,686.0 Q112.0,688.0 113.0,686.0 Q114.0,684.0 115.0,686.0 Q116.0,688.0 117.0,686.0 Q118.0,684.0 119.0,686.0 Q120.0,688.0 121.0,686.0 Q122.0,684.0 123.0,686.0 Q124.0,688.0 125.0,686.0 Q126.0,684.0 127.0,686.0 Q128.0,688.0 129.0,686.0 Q130.0,684.0 131.0,686.0 Q132.0,688.0 133.0,686.0 Q134.0,684.0 135.0,686.0 Q136.0,688.0 137.0,686.0 Q138.0,684.0 139.0,686.0 Q140.0,688.0 141.0,686.0 Q142.0,684.0 143.0,686.0 Q144.0,688.0 145.0,686.0 Q146.0,684.0 147.0,686.0 Q148.0,688.0 149.0,686.0 Q150.0,684.0 151.0,686.0 Q152.0,688.0 153.0,686.0 Q154.0,684.0 155.0,686.0 Q156.0,688.0 157.0,686.0 Q158.0,684.0 159.0,686.0 Q160.0,688.0 161.0,686.0 Q162.0,684.0 163.0,686.0 Q164.0,688.0 165.0,686.0 Q166.0,684.0 167.0,686.0 Q168.0,688.0 169.0,686.0 Q170.0,684.0 171.0,686.0 Q172.0,688.0 173.0,686.0 Q174.0,684.0 175.0,686.0 Q176.0,688.0 177.0,686.0 Q178.0,684.0 179.0,686.0 Q180.0,688.0 181.0,686.0 Q182.0,684.0 183.0,686.0 Q184.0,688.0 185.0,686.0 Q186.0,684.0 187.0,686.0 Q188.0,688.0 189.0,686.0 Q190.0,684.0 191.0,686.0 Q192.0,688.0 193.0,686.0 Q194.0,684.0 195.0,686.0 Q196.0,688.0 197.0,686.0 Q198.0,684.0 199.0,686.0 Q200.0,688.0 201.0,686.0 Q202.0,684.0 203.0,686.0 Q204.0,688.0 205.0,686.0 Q206.0,684.0 207.0,686.0 Q208.0,688.0 209.0,686.0 Q210.0,684.0 211.0,686.0 Q212.0,688.0 213.0,686.0 Q214.0,684.0 215.0,686.0 Q216.0,688.0 217.0,686.0 Q218.0,684.0 219.0,686.0 Q220.0,688.0 221.0,686.0 Q222.0,684.0 223.0,686.0 Q224.0,688.0 225.0,686.0 Q226.0,684.0 227.0,686.0 Q228.0,688.0 229.0,686.0 Q230.0,684.0 231.0,686.0 Q232.0,688.0 233.0,686.0 Q234.0,684.0 235.0,686.0 Q236.0,688.0 237.0,686.0 Q238.0,684.0 239.0,686.0 Q240.0,688.0 241.0,686.0 Q242.0,684.0 243.0,686.0 Q244.0,688.0 245.0,686.0 Q246.0,684.0 247.0,686.0 Q248.0,688.0 249.0,686.0 Q250.0,684.0 251.0,686.0 Q252.0,688.0 253.0,686.0 Q254.0,684.0 255.0,686.0 Q256.0,688.0 257.0,686.0 Q258.0,684.0 259.0,686.0 Q260.0,688.0 261.0,686.0 Q262.0,684.0 263.0,686.0 Q264.0,688.0 265.0,686.0 Q266.0,684.0 267.0,686.0 Q268.0,688.0 269.0,686.0 Q270.0,684.0 271.0,686.0 Q272.0,688.0 273.0,686.0 Q274.0,684.0 275.0,686.0 Q276.0,688.0 277.0,686.0 Q278.0,684.0 279.0,686.0 Q280.0,688.0 281.0,686.0 Q282.0,684.0 283.0,686.0 Q284.0,688.0 285.0,686.0 Q286.0,684.0 287.0,686.0 Q288.0,688.0 289.0,686.0 Q290.0,684.0 291.0,686.0 Q292.0,688.0 293.0,686.0 Q294.0,684.0 295.0,686.0 Q296.0,688.0 297.0,686.0 Q298.0,684.0 299.0,686.0 Q300.0,688.0 301.0,686.0 Q302.0,684.0 303.0,686.0 Q304.0,688.0 305.0,686.0 Q306.0,684.0 307.0,686.0 Q308.0,688.0 309.0,686.0 Q310.0,684.0 311.0,686.0 Q312.0,688.0 313.0,686.0 Q314.0,684.0 315.0,686.0 Q316.0,688.0 317.0,686.0 Q318.0,684.0 319.0,686.0 Q320.0,688.0 321.0,686.0 Q322.0,684.0 323.0,686.0 Q324.0,688.0 325.0,686.0 Q326.0,684.0 327.0,686.0 Q328.0,688.0 329.0,686.0 Q330.0,684.0 331.0,686.0 Q332.0,688.0 333.0,686.0 Q334.0,684.0 335.0,686.0 Q336.0,688.0 337.0,686.0 Q338.0,684.0 339.0,686.0 Q340.0,688.0 341.0,686.0 Q342.0,684.0 343.0,686.0 Q344.0,688.0 345.0,686.0 Q346.0,684.0 347.0,686.0 Q348.0,688.0 349.0,686.0" fill="none" stroke="#e0e070" stroke-width="1"/>
<!-- warning icons -->
<g>
<path d="M12,312.5 L19.5,325.5 H4.5 Z" fill="#f6d85a" stroke="#c89a18" stroke-width="1.1" stroke-linejoin="round"/>
<path d="M12,316.5 V321" stroke="#8a6000" stroke-width="1.6"/><circle cx="12" cy="323" r="0.9" fill="#8a6000"/>
</g>
<g transform="translate(0,144)">
<path d="M12,312.5 L19.5,325.5 H4.5 Z" fill="#f6d85a" stroke="#c89a18" stroke-width="1.1" stroke-linejoin="round"/>
<path d="M12,316.5 V321" stroke="#8a6000" stroke-width="1.6"/><circle cx="12" cy="323" r="0.9" fill="#8a6000"/>
</g>
<g transform="translate(0,360)">
<path d="M12,312.5 L19.5,325.5 H4.5 Z" fill="#f6d85a" stroke="#c89a18" stroke-width="1.1" stroke-linejoin="round"/>
<path d="M12,316.5 V321" stroke="#8a6000" stroke-width="1.6"/><circle cx="12" cy="323" r="0.9" fill="#8a6000"/>
</g>
</svg>
<!--LINES--><div id="lines" class="a" style="left:0;top:76px;width:712px;height:680px;overflow:hidden">
<div class="ln" style="top:2px">39</div>
<div class="a code" style="left:61px;top:2px"><span class="cm"># Points to construct our polyline so we can revolve it</span></div>
<div class="ln" style="top:20px">40</div>
<div class="a code" style="left:61px;top:20px"><span class="cm"># chamber_points = [(0, 0),</span></div>
<div class="ln" style="top:38px">41</div>
<div class="a code" style="left:61px;top:38px"><span class="cm">#                   (angle_start, 0),</span></div>
<div class="ln" style="top:56px">42</div>
<div class="a code" style="left:61px;top:56px"><span class="cm">#                   (angle_start + converg_sect_length, angle_end_point),</span></div>
<div class="ln" style="top:74px">43</div>
<div class="a code" style="left:61px;top:74px"><span class="cm">#                   (angle_start + converg_sect_length, angle_end_point + t),</span></div>
<div class="ln" style="top:92px">44</div>
<div class="a code" style="left:61px;top:92px"><span class="cm">#                   (angle_start, t),</span></div>
<div class="ln" style="top:110px">45</div>
<div class="a code" style="left:61px;top:110px"><span class="cm">#                   (0, t),</span></div>
<div class="ln" style="top:128px">46</div>
<div class="a code" style="left:61px;top:128px"><span class="cm">#                   (0, 0)]</span></div>
<div class="ln" style="top:146px">47</div>
<div class="ln" style="top:164px">48</div>
<div class="a code" style="left:61px;top:164px"><span class="cm"># Set up some of our re-usable dimensions</span></div>
<div class="ln" style="top:182px">49</div>
<div class="a code" style="left:61px;top:182px">dtheta = angle_start + converg_sect_length</div>
<div class="ln" style="top:200px">50</div>
<div class="ln" style="top:218px">51</div>
<div class="a code" style="left:61px;top:218px">pointX = dtheta - math.cos(angle_radians) * math.tan(angle_radians) * t</div>
<div class="ln" style="top:236px">52</div>
<div class="a code" style="left:61px;top:236px">pointY = angle_end_point - math.sin(angle_radians) * math.tan(angle_radians) * t</div>
<div class="ln" style="top:254px">53</div>
<div class="a code" style="left:61px;top:254px">diffX = pointX - angle_start</div>
<div class="ln" style="top:272px">54</div>
<div class="a code" style="left:61px;top:272px">diffY = pointY - <span class="nu">0</span></div>
<div class="ln" style="top:290px">55</div>
<div class="ln" style="top:308px">56</div>
<div class="a code" style="left:61px;top:308px">chamber_points = [(<span class="nu">0</span>, <span class="nu">0</span>),</div>
<div class="ln" style="top:326px">57</div>
<div class="a code" style="left:61px;top:326px">                  (angle_start, <span class="nu">0</span>),</div>
<div class="ln" style="top:344px">58</div>
<div class="a code" style="left:61px;top:344px">                  (dtheta, angle_end_point),</div>
<div class="ln" style="top:362px">59</div>
<div class="a code" style="left:61px;top:362px">                  (dtheta, angle_end_point - t / math.cos(angle_radians)),</div>
<div class="ln" style="top:380px">60</div>
<div class="a code" style="left:61px;top:380px">                  ((dtheta - diffX), (angle_end_point - t / math.cos(angle_radians))),</div>
<div class="ln" style="top:398px">61</div>
<div class="a code" style="left:61px;top:398px">                  (angle_start, -t),</div>
<div class="ln" style="top:416px">62</div>
<div class="a code" style="left:61px;top:416px">                  (<span class="nu">0</span>, -t),</div>
<div class="ln" style="top:434px">63</div>
<div class="a code" style="left:61px;top:434px">                  (<span class="nu">0</span>, <span class="nu">0</span>)</div>
<div class="ln" style="top:452px">64</div>
<div class="a code" style="left:61px;top:452px">                  ]</div>
<div class="ln" style="top:470px">65</div>
<div class="ln" style="top:488px">66</div>
<div class="a code" style="left:61px;top:488px">outline = cq.Workplane(<span class="st">&#x27;XY&#x27;</span>).polyline(chamber_points)</div>
<div class="ln" style="top:506px">67</div>
<div class="ln" style="top:524px">68</div>
<div class="a code" style="left:61px;top:524px">chamber = outline.revolve(<span class="nu">360.0</span>, (<span class="nu">0</span>, angle_end_point + t + ri, <span class="nu">0</span>),</div>
<div class="ln" style="top:542px">69</div>
<div class="a code" style="left:61px;top:542px">                          (<span class="nu">1</span>, angle_end_point + t + ri, <span class="nu">0</span>))</div>
<div class="ln" style="top:560px">70</div>
<div class="ln" style="top:578px">71</div>
<div class="a code" style="left:61px;top:578px"><span class="cm"># Use the following to render your model with grey RGB and no transparency</span></div>
<div class="ln" style="top:596px">72</div>
<div class="a code" style="left:61px;top:596px"><span class="cm">#show(outline, (204, 204, 204, 0.0))</span></div>
<div class="ln" style="top:614px">73</div>
<div class="a code" style="left:61px;top:614px">show(chamber, (<span class="nu">204</span>, <span class="nu">204</span>, <span class="nu">204</span>, <span class="nu">0.0</span>))</div>
<div class="ln" style="top:632px">74</div>
</div>
<!--/LINES-->
<!--CHROME1-->
<!-- red edge line -->
<div class="a" style="left:692px;top:76px;width:1px;height:680px;background:#ff0000"></div>
<!-- light strip + markers -->
<div class="a" style="left:712px;top:418px;width:12px;height:315px;background:#f2f2f2"></div>
<div class="a" style="left:715px;top:274px;width:5px;height:9px;background:#d8d83c"></div>
<div class="a" style="left:715px;top:319px;width:5px;height:9px;background:#d8d83c"></div>
<div class="a" style="left:715px;top:355px;width:5px;height:9px;background:#d8d83c"></div>
<div class="a" style="left:715px;top:535px;width:5px;height:9px;background:#e2e296"></div>
<div class="a" style="left:715px;top:607px;width:5px;height:9px;background:#e2e296"></div>
<div class="a" style="left:715px;top:715px;width:5px;height:9px;background:#e2e296"></div>
<!-- vertical scrollbar code -->
<div class="a checker" style="left:725px;top:76px;width:16px;height:680px"></div>
<div class="btn" style="left:725px;top:76px;width:16px;height:16px"></div>
<div class="a" style="left:729px;top:82px;width:0;height:0;border-left:4px solid transparent;border-right:4px solid transparent;border-bottom:4px solid #000"></div>
<div class="btn" style="left:725px;top:302px;width:16px;height:232px"></div>
<div class="btn" style="left:725px;top:740px;width:16px;height:16px"></div>
<div class="a" style="left:729px;top:746px;width:0;height:0;border-left:4px solid transparent;border-right:4px solid transparent;border-top:4px solid #000"></div>
<!-- horizontal scrollbar code -->
<div class="a checker" style="left:4px;top:756px;width:721px;height:16px"></div>
<div class="btn" style="left:4px;top:756px;width:16px;height:16px"></div>
<div class="a" style="left:10px;top:760px;width:0;height:0;border-top:4px solid transparent;border-bottom:4px solid transparent;border-right:4px solid #000"></div>
<div class="btn" style="left:20px;top:756px;width:332px;height:16px"></div>
<div class="btn" style="left:709px;top:756px;width:16px;height:16px"></div>
<div class="a" style="left:715px;top:760px;width:0;height:0;border-top:4px solid transparent;border-bottom:4px solid transparent;border-left:4px solid #000"></div>
<div class="a" style="left:725px;top:756px;width:16px;height:16px;background:#d4d0c8"></div>
<!-- code frame right/bottom highlight -->
<div class="a" style="left:741px;top:75px;width:1px;height:698px;background:#fff"></div>
<div class="a" style="left:2px;top:772px;width:740px;height:1px;background:#fff"></div>
<!-- dock title buttons -->
<svg class="a" style="left:712px;top:55px" width="32" height="16" viewBox="712 55 32 16">
<path d="M719.5,58.5 H724.5 V63.5 H722.5 M719.5,58.5 V60.5" fill="none" stroke="#000" stroke-width="1"/>
<path d="M719,58 H725 V59.5 H719 Z" fill="#000"/>
<rect x="716.5" y="61.5" width="6" height="5" fill="none" stroke="#000"/>
<path d="M716,61 H723 V62.5 H716 Z" fill="#000"/>
<path d="M731.5,58.5 L738.5,65.5 M738.5,58.5 L731.5,65.5" stroke="#000" stroke-width="1.5"/>
</svg>
<!--/CHROME1-->
<!-- viewport -->
<div class="a" style="left:748px;top:54px;width:1px;height:697px;background:#000"></div>
<div id="vp" class="a" style="left:749px;top:54px;width:1169px;height:696px;background:linear-gradient(#333366,#ababc1)"></div>
<div class="a" style="left:749px;top:750px;width:1169px;height:1px;background:#000"></div>

<!--MODEL--><svg class="a" style="left:749px;top:54px" width="1169" height="696" viewBox="749 54 1169 696">
<path d="M1101.0,511.3 L1095.6,507.9 L1262.6,603.6 L1268.0,607.0 Z" fill="#0c0c0c"/>
<path d="M1098.2,509.6 L1093.0,506.0 L1260.0,601.7 L1265.3,605.4 Z" fill="#111111"/>
<path d="M1095.6,507.9 L1090.5,504.0 L1257.5,599.7 L1262.6,603.6 Z" fill="#151515"/>
<path d="M1093.0,506.0 L1088.0,501.8 L1255.1,597.6 L1260.0,601.7 Z" fill="#191919"/>
<path d="M1090.5,504.0 L1085.7,499.6 L1252.7,595.3 L1257.5,599.7 Z" fill="#1e1e1e"/>
<path d="M1088.0,501.8 L1083.4,497.2 L1250.4,593.0 L1255.1,597.6 Z" fill="#222222"/>
<path d="M1085.7,499.6 L1081.2,494.7 L1248.2,590.5 L1252.7,595.3 Z" fill="#262626"/>
<path d="M1083.4,497.2 L1079.1,492.1 L1246.1,587.9 L1250.4,593.0 Z" fill="#2a2a2a"/>
<path d="M1081.2,494.7 L1077.1,489.4 L1244.1,585.2 L1248.2,590.5 Z" fill="#2f2f2f"/>
<path d="M1079.1,492.1 L1075.1,486.6 L1242.2,582.4 L1246.1,587.9 Z" fill="#333333"/>
<path d="M1077.1,489.4 L1073.3,483.7 L1240.3,579.4 L1244.1,585.2 Z" fill="#373737"/>
<path d="M1075.1,486.6 L1071.5,480.6 L1238.6,576.4 L1242.2,582.4 Z" fill="#3b3b3b"/>
<path d="M1073.3,483.7 L1069.9,477.5 L1236.9,573.3 L1240.3,579.4 Z" fill="#3f3f3f"/>
<path d="M1071.5,480.6 L1068.3,474.3 L1235.3,570.0 L1238.6,576.4 Z" fill="#434343"/>
<path d="M1069.9,477.5 L1066.8,470.9 L1233.8,566.7 L1236.9,573.3 Z" fill="#474747"/>
<path d="M1068.3,474.3 L1065.4,467.5 L1232.5,563.3 L1235.3,570.0 Z" fill="#4c4c4c"/>
<path d="M1066.8,470.9 L1064.2,464.0 L1231.2,559.7 L1233.8,566.7 Z" fill="#4f4f4f"/>
<path d="M1065.4,467.5 L1063.0,460.3 L1230.0,556.1 L1232.5,563.3 Z" fill="#535353"/>
<path d="M1064.2,464.0 L1061.9,456.6 L1228.9,552.4 L1231.2,559.7 Z" fill="#575757"/>
<path d="M1063.0,460.3 L1060.9,452.8 L1227.9,548.6 L1230.0,556.1 Z" fill="#5b5b5b"/>
<path d="M1061.9,456.6 L1060.0,448.9 L1227.0,544.7 L1228.9,552.4 Z" fill="#5f5f5f"/>
<path d="M1060.9,452.8 L1059.2,445.0 L1226.2,540.7 L1227.9,548.6 Z" fill="#636363"/>
<path d="M1060.0,448.9 L1058.5,440.9 L1225.5,536.7 L1227.0,544.7 Z" fill="#666666"/>
<path d="M1059.2,445.0 L1057.9,436.8 L1224.9,532.6 L1226.2,540.7 Z" fill="#6a6a6a"/>
<path d="M1058.5,440.9 L1057.4,432.6 L1224.4,528.4 L1225.5,536.7 Z" fill="#6d6d6d"/>
<path d="M1057.9,436.8 L1057.0,428.3 L1224.0,524.1 L1224.9,532.6 Z" fill="#717171"/>
<path d="M1057.4,432.6 L1056.7,424.0 L1223.7,519.8 L1224.4,528.4 Z" fill="#747474"/>
<path d="M1057.0,428.3 L1056.5,419.6 L1223.5,515.4 L1224.0,524.1 Z" fill="#777777"/>
<path d="M1056.7,424.0 L1056.4,415.1 L1223.4,510.9 L1223.7,519.8 Z" fill="#7b7b7b"/>
<path d="M1056.5,419.6 L1056.4,410.6 L1223.4,506.4 L1223.5,515.4 Z" fill="#7e7e7e"/>
<path d="M1056.4,415.1 L1056.5,406.0 L1223.6,501.8 L1223.4,510.9 Z" fill="#818181"/>
<path d="M1056.4,410.6 L1056.8,401.4 L1223.8,497.2 L1223.4,506.4 Z" fill="#848484"/>
<path d="M1056.5,406.0 L1057.1,396.7 L1224.1,492.5 L1223.6,501.8 Z" fill="#878787"/>
<path d="M1056.8,401.4 L1057.5,392.0 L1224.5,487.8 L1223.8,497.2 Z" fill="#8a8a8a"/>
<path d="M1057.1,396.7 L1058.0,387.2 L1225.0,483.0 L1224.1,492.5 Z" fill="#8c8c8c"/>
<path d="M1057.5,392.0 L1058.6,382.4 L1225.6,478.2 L1224.5,487.8 Z" fill="#8f8f8f"/>
<path d="M1058.0,387.2 L1059.3,377.6 L1226.4,473.3 L1225.0,483.0 Z" fill="#929292"/>
<path d="M1058.6,382.4 L1060.2,372.7 L1227.2,468.4 L1225.6,478.2 Z" fill="#949494"/>
<path d="M1059.3,377.6 L1061.1,367.8 L1228.1,463.5 L1226.4,473.3 Z" fill="#969696"/>
<path d="M1060.2,372.7 L1062.1,362.8 L1229.1,458.6 L1227.2,468.4 Z" fill="#999999"/>
<path d="M1061.1,367.8 L1063.2,357.9 L1230.2,453.6 L1228.1,463.5 Z" fill="#9b9b9b"/>
<path d="M1062.1,362.8 L1064.4,352.9 L1231.4,448.7 L1229.1,458.6 Z" fill="#9d9d9d"/>
<path d="M1063.2,357.9 L1065.7,347.9 L1232.7,443.7 L1230.2,453.6 Z" fill="#9f9f9f"/>
<path d="M1064.4,352.9 L1067.1,342.9 L1234.1,438.6 L1231.4,448.7 Z" fill="#a1a1a1"/>
<path d="M1065.7,347.9 L1068.6,337.9 L1235.6,433.6 L1232.7,443.7 Z" fill="#a2a2a2"/>
<path d="M1067.1,342.9 L1070.2,332.8 L1237.2,428.6 L1234.1,438.6 Z" fill="#a4a4a4"/>
<path d="M1068.6,337.9 L1071.9,327.8 L1238.9,423.6 L1235.6,433.6 Z" fill="#a6a6a6"/>
<path d="M1070.2,332.8 L1073.7,322.8 L1240.7,418.5 L1237.2,428.6 Z" fill="#a7a7a7"/>
<path d="M1071.9,327.8 L1075.5,317.7 L1242.6,413.5 L1238.9,423.6 Z" fill="#a8a8a8"/>
<path d="M1073.7,322.8 L1077.5,312.7 L1244.5,408.5 L1240.7,418.5 Z" fill="#aaaaaa"/>
<path d="M1075.5,317.7 L1079.5,307.7 L1246.5,403.5 L1242.6,413.5 Z" fill="#ababab"/>
<path d="M1077.5,312.7 L1081.6,302.7 L1248.7,398.5 L1244.5,408.5 Z" fill="#acacac"/>
<path d="M1079.5,307.7 L1083.9,297.8 L1250.9,393.5 L1246.5,403.5 Z" fill="#adadad"/>
<path d="M1081.6,302.7 L1086.2,292.8 L1253.2,388.6 L1248.7,398.5 Z" fill="#aeaeae"/>
<path d="M1083.9,297.8 L1088.5,287.9 L1255.5,383.7 L1250.9,393.5 Z" fill="#aeaeae"/>
<path d="M1086.2,292.8 L1091.0,283.0 L1258.0,378.8 L1253.2,388.6 Z" fill="#afafaf"/>
<path d="M1088.5,287.9 L1093.5,278.1 L1260.5,373.9 L1255.5,383.7 Z" fill="#afafaf"/>
<path d="M1091.0,283.0 L1096.1,273.3 L1263.1,369.1 L1258.0,378.8 Z" fill="#b0b0b0"/>
<path d="M1093.5,278.1 L1098.8,268.5 L1265.8,364.3 L1260.5,373.9 Z" fill="#b0b0b0"/>
<path d="M1096.1,273.3 L1101.6,263.7 L1268.6,359.5 L1263.1,369.1 Z" fill="#b0b0b0"/>
<path d="M1098.8,268.5 L1104.4,259.0 L1271.4,354.8 L1265.8,364.3 Z" fill="#b0b0b0"/>
<path d="M1101.6,263.7 L1107.3,254.4 L1274.3,350.1 L1268.6,359.5 Z" fill="#b0b0b0"/>
<path d="M1104.4,259.0 L1110.2,249.8 L1277.3,345.5 L1271.4,354.8 Z" fill="#b0b0b0"/>
<path d="M1107.3,254.4 L1113.3,245.2 L1280.3,341.0 L1274.3,350.1 Z" fill="#afafaf"/>
<path d="M1110.2,249.8 L1116.4,240.7 L1283.4,336.5 L1277.3,345.5 Z" fill="#afafaf"/>
<path d="M1113.3,245.2 L1119.5,236.3 L1286.5,332.0 L1280.3,341.0 Z" fill="#aeaeae"/>
<path d="M1116.4,240.7 L1122.7,231.9 L1289.7,327.7 L1283.4,336.5 Z" fill="#aeaeae"/>
<path d="M1119.5,236.3 L1126.0,227.6 L1293.0,323.4 L1286.5,332.0 Z" fill="#adadad"/>
<path d="M1122.7,231.9 L1129.3,223.4 L1296.3,319.1 L1289.7,327.7 Z" fill="#acacac"/>
<path d="M1126.0,227.6 L1132.7,219.2 L1299.7,315.0 L1293.0,323.4 Z" fill="#ababab"/>
<path d="M1129.3,223.4 L1136.1,215.1 L1303.1,310.9 L1296.3,319.1 Z" fill="#aaaaaa"/>
<path d="M1132.7,219.2 L1139.6,211.1 L1306.6,306.9 L1299.7,315.0 Z" fill="#a8a8a8"/>
<path d="M1136.1,215.1 L1143.1,207.2 L1310.1,302.9 L1303.1,310.9 Z" fill="#a7a7a7"/>
<path d="M1139.6,211.1 L1146.6,203.3 L1313.7,299.1 L1306.6,306.9 Z" fill="#a6a6a6"/>
<path d="M1143.1,207.2 L1150.2,199.6 L1317.2,295.3 L1310.1,302.9 Z" fill="#a4a4a4"/>
<path d="M1146.6,203.3 L1153.9,195.9 L1320.9,291.6 L1313.7,299.1 Z" fill="#a2a2a2"/>
<path d="M1150.2,199.6 L1157.5,192.3 L1324.5,288.1 L1317.2,295.3 Z" fill="#a1a1a1"/>
<path d="M1153.9,195.9 L1161.2,188.8 L1328.2,284.6 L1320.9,291.6 Z" fill="#9f9f9f"/>
<path d="M1157.5,192.3 L1165.0,185.4 L1332.0,281.2 L1324.5,288.1 Z" fill="#9d9d9d"/>
<path d="M1161.2,188.8 L1168.7,182.1 L1335.7,277.9 L1328.2,284.6 Z" fill="#9b9b9b"/>
<path d="M1165.0,185.4 L1172.5,178.9 L1339.5,274.7 L1332.0,281.2 Z" fill="#999999"/>
<path d="M1168.7,182.1 L1176.3,175.8 L1343.3,271.6 L1335.7,277.9 Z" fill="#969696"/>
<path d="M1172.5,178.9 L1180.1,172.9 L1347.1,268.6 L1339.5,274.7 Z" fill="#949494"/>
<path d="M1176.3,175.8 L1184.0,170.0 L1351.0,265.7 L1343.3,271.6 Z" fill="#929292"/>
<path d="M1180.1,172.9 L1187.8,167.2 L1354.8,263.0 L1347.1,268.6 Z" fill="#8f8f8f"/>
<path d="M1184.0,170.0 L1191.7,164.5 L1358.7,260.3 L1351.0,265.7 Z" fill="#8c8c8c"/>
<path d="M1187.8,167.2 L1195.6,162.0 L1362.6,257.8 L1354.8,263.0 Z" fill="#8a8a8a"/>
<path d="M1191.7,164.5 L1199.4,159.6 L1366.5,255.3 L1358.7,260.3 Z" fill="#878787"/>
<path d="M1195.6,162.0 L1203.3,157.3 L1370.3,253.0 L1362.6,257.8 Z" fill="#848484"/>
<path d="M1199.4,159.6 L1207.2,155.1 L1374.2,250.8 L1366.5,255.3 Z" fill="#818181"/>
<path d="M1203.3,157.3 L1211.1,153.0 L1378.1,248.7 L1370.3,253.0 Z" fill="#7e7e7e"/>
<path d="M1207.2,155.1 L1215.0,151.0 L1382.0,246.8 L1374.2,250.8 Z" fill="#7b7b7b"/>
<path d="M1211.1,153.0 L1218.9,149.2 L1385.9,245.0 L1378.1,248.7 Z" fill="#777777"/>
<path d="M1215.0,151.0 L1222.7,147.5 L1389.7,243.2 L1382.0,246.8 Z" fill="#747474"/>
<path d="M1218.9,149.2 L1226.6,145.9 L1393.6,241.7 L1385.9,245.0 Z" fill="#717171"/>
<path d="M1222.7,147.5 L1230.4,144.4 L1397.4,240.2 L1389.7,243.2 Z" fill="#6d6d6d"/>
<path d="M1226.6,145.9 L1234.2,143.1 L1401.2,238.9 L1393.6,241.7 Z" fill="#6a6a6a"/>
<path d="M1230.4,144.4 L1238.0,141.9 L1405.0,237.6 L1397.4,240.2 Z" fill="#666666"/>
<path d="M1234.2,143.1 L1241.8,140.8 L1408.8,236.6 L1401.2,238.9 Z" fill="#636363"/>
<path d="M1238.0,141.9 L1245.6,139.8 L1412.6,235.6 L1405.0,237.6 Z" fill="#5f5f5f"/>
<path d="M1241.8,140.8 L1249.3,139.0 L1416.3,234.8 L1408.8,236.6 Z" fill="#5b5b5b"/>
<path d="M1245.6,139.8 L1253.0,138.3 L1420.0,234.1 L1412.6,235.6 Z" fill="#575757"/>
<path d="M1249.3,139.0 L1256.6,137.8 L1423.6,233.5 L1416.3,234.8 Z" fill="#535353"/>
<path d="M1253.0,138.3 L1260.3,137.3 L1427.3,233.1 L1420.0,234.1 Z" fill="#4f4f4f"/>
<path d="M1256.6,137.8 L1263.8,137.0 L1430.9,232.8 L1423.6,233.5 Z" fill="#4c4c4c"/>
<path d="M1260.3,137.3 L1267.4,136.9 L1434.4,232.6 L1427.3,233.1 Z" fill="#474747"/>
<path d="M1263.8,137.0 L1270.9,136.8 L1437.9,232.6 L1430.9,232.8 Z" fill="#434343"/>
<path d="M1267.4,136.9 L1274.3,136.9 L1441.4,232.7 L1434.4,232.6 Z" fill="#3f3f3f"/>
<path d="M1270.9,136.8 L1277.8,137.1 L1444.8,232.9 L1437.9,232.6 Z" fill="#3b3b3b"/>
<path d="M1274.3,136.9 L1281.1,137.5 L1448.1,233.3 L1441.4,232.7 Z" fill="#373737"/>
<path d="M1277.8,137.1 L1284.4,138.0 L1451.4,233.8 L1444.8,232.9 Z" fill="#333333"/>
<path d="M1281.1,137.5 L1287.7,138.6 L1454.7,234.4 L1448.1,233.3 Z" fill="#2f2f2f"/>
<path d="M1284.4,138.0 L1290.9,139.4 L1457.9,235.1 L1451.4,233.8 Z" fill="#2a2a2a"/>
<path d="M1287.7,138.6 L1294.0,140.2 L1461.0,236.0 L1454.7,234.4 Z" fill="#262626"/>
<path d="M1290.9,139.4 L1297.1,141.3 L1464.1,237.0 L1457.9,235.1 Z" fill="#222222"/>
<path d="M1294.0,140.2 L1300.1,142.4 L1467.1,238.2 L1461.0,236.0 Z" fill="#1e1e1e"/>
<path d="M1297.1,141.3 L1303.1,143.7 L1470.1,239.4 L1464.1,237.0 Z" fill="#191919"/>
<path d="M1300.1,142.4 L1305.9,145.1 L1473.0,240.8 L1467.1,238.2 Z" fill="#151515"/>
<path d="M1303.1,143.7 L1308.8,146.6 L1475.8,242.3 L1470.1,239.4 Z" fill="#111111"/>
<path d="M1305.9,145.1 L1308.8,146.6 L1475.8,242.3 L1473.0,240.8 Z" fill="#0c0c0c"/>
<path d="M1475.8,242.3 L1481.2,245.8 L1507.0,404.2 L1504.9,402.8 Z" fill="#5c5c5c"/>
<path d="M1478.5,244.0 L1483.8,247.6 L1508.1,405.0 L1506.0,403.5 Z" fill="#595959"/>
<path d="M1481.2,245.8 L1486.3,249.7 L1509.1,405.8 L1507.0,404.2 Z" fill="#565656"/>
<path d="M1483.8,247.6 L1488.7,251.8 L1510.0,406.7 L1508.1,405.0 Z" fill="#535353"/>
<path d="M1486.3,249.7 L1491.1,254.0 L1511.0,407.7 L1509.1,405.8 Z" fill="#505050"/>
<path d="M1488.7,251.8 L1493.4,256.4 L1511.9,408.6 L1510.0,406.7 Z" fill="#4d4d4d"/>
<path d="M1491.1,254.0 L1495.6,258.9 L1512.7,409.7 L1511.0,407.7 Z" fill="#4a4a4a"/>
<path d="M1493.4,256.4 L1497.7,261.5 L1513.5,410.7 L1511.9,408.6 Z" fill="#474747"/>
<path d="M1495.6,258.9 L1499.7,264.2 L1514.3,411.9 L1512.7,409.7 Z" fill="#444444"/>
<path d="M1497.7,261.5 L1501.6,267.0 L1515.1,413.0 L1513.5,410.7 Z" fill="#414141"/>
<path d="M1499.7,264.2 L1503.5,269.9 L1515.8,414.2 L1514.3,411.9 Z" fill="#3e3e3e"/>
<path d="M1501.6,267.0 L1505.2,273.0 L1516.5,415.5 L1515.1,413.0 Z" fill="#3b3b3b"/>
<path d="M1503.5,269.9 L1506.9,276.1 L1517.1,416.7 L1515.8,414.2 Z" fill="#383838"/>
<path d="M1505.2,273.0 L1508.5,279.3 L1517.7,418.1 L1516.5,415.5 Z" fill="#353535"/>
<path d="M1506.9,276.1 L1509.9,282.7 L1518.3,419.4 L1517.1,416.7 Z" fill="#323232"/>
<path d="M1508.5,279.3 L1511.3,286.1 L1518.8,420.9 L1517.7,418.1 Z" fill="#303030"/>
<path d="M1509.9,282.7 L1512.6,289.7 L1519.3,422.3 L1518.3,419.4 Z" fill="#2d2d2d"/>
<path d="M1511.3,286.1 L1513.8,293.3 L1519.8,423.8 L1518.8,420.9 Z" fill="#2a2a2a"/>
<path d="M1512.6,289.7 L1514.9,297.0 L1520.2,425.3 L1519.3,422.3 Z" fill="#272727"/>
<path d="M1513.8,293.3 L1515.9,300.8 L1520.5,426.8 L1519.8,423.8 Z" fill="#252525"/>
<path d="M1514.9,297.0 L1516.8,304.7 L1520.9,428.4 L1520.2,425.3 Z" fill="#222222"/>
<path d="M1515.9,300.8 L1517.6,308.6 L1521.2,430.0 L1520.5,426.8 Z" fill="#1f1f1f"/>
<path d="M1516.8,304.7 L1518.3,312.7 L1521.4,431.7 L1520.9,428.4 Z" fill="#1d1d1d"/>
<path d="M1517.6,308.6 L1518.9,316.8 L1521.6,433.4 L1521.2,430.0 Z" fill="#1a1a1a"/>
<path d="M1518.3,312.7 L1519.4,321.0 L1521.8,435.1 L1521.4,431.7 Z" fill="#181818"/>
<path d="M1518.9,316.8 L1519.8,325.3 L1521.9,436.8 L1521.6,433.4 Z" fill="#151515"/>
<path d="M1519.4,321.0 L1520.1,329.6 L1522.0,438.6 L1521.8,435.1 Z" fill="#131313"/>
<path d="M1519.8,325.3 L1520.3,334.0 L1522.0,440.4 L1521.9,436.8 Z" fill="#111111"/>
<path d="M1520.1,329.6 L1520.3,338.5 L1522.0,442.2 L1522.0,438.6 Z" fill="#0e0e0e"/>
<path d="M1520.3,334.0 L1520.3,343.0 L1521.9,444.0 L1522.0,440.4 Z" fill="#0c0c0c"/>
<path d="M1373.4,596.4 L1365.7,600.6 L1456.8,547.4 L1459.9,545.7 Z" fill="#0c0c0c"/>
<path d="M1369.5,598.6 L1361.8,602.6 L1455.2,548.2 L1458.3,546.6 Z" fill="#0e0e0e"/>
<path d="M1365.7,600.6 L1357.9,604.4 L1453.6,548.9 L1456.8,547.4 Z" fill="#111111"/>
<path d="M1361.8,602.6 L1354.0,606.1 L1452.0,549.5 L1455.2,548.2 Z" fill="#131313"/>
<path d="M1357.9,604.4 L1350.2,607.7 L1450.4,550.2 L1453.6,548.9 Z" fill="#151515"/>
<path d="M1354.0,606.1 L1346.4,609.2 L1448.8,550.7 L1452.0,549.5 Z" fill="#181818"/>
<path d="M1350.2,607.7 L1342.5,610.5 L1447.3,551.2 L1450.4,550.2 Z" fill="#1a1a1a"/>
<path d="M1346.4,609.2 L1338.7,611.7 L1445.7,551.7 L1448.8,550.7 Z" fill="#1d1d1d"/>
<path d="M1342.5,610.5 L1335.0,612.8 L1444.2,552.1 L1447.3,551.2 Z" fill="#1f1f1f"/>
<path d="M1338.7,611.7 L1331.2,613.8 L1442.7,552.5 L1445.7,551.7 Z" fill="#222222"/>
<path d="M1335.0,612.8 L1327.5,614.6 L1441.2,552.8 L1444.2,552.1 Z" fill="#252525"/>
<path d="M1331.2,613.8 L1323.8,615.3 L1439.6,553.0 L1442.7,552.5 Z" fill="#272727"/>
<path d="M1327.5,614.6 L1320.1,615.8 L1438.2,553.2 L1441.2,552.8 Z" fill="#2a2a2a"/>
<path d="M1323.8,615.3 L1316.5,616.3 L1436.7,553.4 L1439.6,553.0 Z" fill="#2d2d2d"/>
<path d="M1320.1,615.8 L1312.9,616.6 L1435.2,553.4 L1438.2,553.2 Z" fill="#303030"/>
<path d="M1316.5,616.3 L1309.4,616.7 L1433.8,553.5 L1436.7,553.4 Z" fill="#323232"/>
<path d="M1312.9,616.6 L1305.9,616.8 L1432.4,553.5 L1435.2,553.4 Z" fill="#353535"/>
<path d="M1309.4,616.7 L1302.4,616.7 L1431.0,553.4 L1433.8,553.5 Z" fill="#383838"/>
<path d="M1305.9,616.8 L1299.0,616.5 L1429.6,553.3 L1432.4,553.5 Z" fill="#3b3b3b"/>
<path d="M1302.4,616.7 L1295.6,616.1 L1428.2,553.1 L1431.0,553.4 Z" fill="#3e3e3e"/>
<path d="M1299.0,616.5 L1292.3,615.6 L1426.9,552.9 L1429.6,553.3 Z" fill="#414141"/>
<path d="M1295.6,616.1 L1289.1,615.0 L1425.6,552.6 L1428.2,553.1 Z" fill="#444444"/>
<path d="M1292.3,615.6 L1285.9,614.2 L1424.3,552.3 L1426.9,552.9 Z" fill="#474747"/>
<path d="M1289.1,615.0 L1282.7,613.4 L1423.0,551.9 L1425.6,552.6 Z" fill="#4a4a4a"/>
<path d="M1285.9,614.2 L1279.7,612.4 L1421.8,551.5 L1424.3,552.3 Z" fill="#4d4d4d"/>
<path d="M1282.7,613.4 L1276.7,611.2 L1420.6,551.0 L1423.0,551.9 Z" fill="#505050"/>
<path d="M1279.7,612.4 L1273.7,609.9 L1419.4,550.4 L1421.8,551.5 Z" fill="#535353"/>
<path d="M1276.7,611.2 L1270.8,608.6 L1418.3,549.9 L1420.6,551.0 Z" fill="#565656"/>
<path d="M1273.7,609.9 L1268.0,607.0 L1417.1,549.2 L1419.4,550.4 Z" fill="#595959"/>
<path d="M1270.8,608.6 L1265.3,605.4 L1416.0,548.5 L1418.3,549.9 Z" fill="#5c5c5c"/>
<path d="M1268.0,607.0 L1262.6,603.6 L1415.0,547.8 L1417.1,549.2 Z" fill="#5f5f5f"/>
<path d="M1265.3,605.4 L1260.0,601.7 L1413.9,547.0 L1416.0,548.5 Z" fill="#636363"/>
<path d="M1262.6,603.6 L1257.5,599.7 L1412.9,546.2 L1415.0,547.8 Z" fill="#666666"/>
<path d="M1260.0,601.7 L1255.1,597.6 L1412.0,545.3 L1413.9,547.0 Z" fill="#696969"/>
<path d="M1257.5,599.7 L1252.7,595.3 L1411.0,544.3 L1412.9,546.2 Z" fill="#6c6c6c"/>
<path d="M1255.1,597.6 L1250.4,593.0 L1410.1,543.4 L1412.0,545.3 Z" fill="#6f6f6f"/>
<path d="M1252.7,595.3 L1248.2,590.5 L1409.3,542.3 L1411.0,544.3 Z" fill="#727272"/>
<path d="M1250.4,593.0 L1246.1,587.9 L1408.5,541.3 L1410.1,543.4 Z" fill="#757575"/>
<path d="M1248.2,590.5 L1244.1,585.2 L1407.7,540.1 L1409.3,542.3 Z" fill="#787878"/>
<path d="M1246.1,587.9 L1242.2,582.4 L1406.9,539.0 L1408.5,541.3 Z" fill="#7b7b7b"/>
<path d="M1244.1,585.2 L1240.3,579.4 L1406.2,537.8 L1407.7,540.1 Z" fill="#7e7e7e"/>
<path d="M1242.2,582.4 L1238.6,576.4 L1405.5,536.5 L1406.9,539.0 Z" fill="#818181"/>
<path d="M1240.3,579.4 L1236.9,573.3 L1404.9,535.3 L1406.2,537.8 Z" fill="#848484"/>
<path d="M1238.6,576.4 L1235.3,570.0 L1404.3,533.9 L1405.5,536.5 Z" fill="#878787"/>
<path d="M1236.9,573.3 L1233.8,566.7 L1403.7,532.6 L1404.9,535.3 Z" fill="#898989"/>
<path d="M1235.3,570.0 L1232.5,563.3 L1403.2,531.1 L1404.3,533.9 Z" fill="#8c8c8c"/>
<path d="M1233.8,566.7 L1231.2,559.7 L1402.7,529.7 L1403.7,532.6 Z" fill="#8f8f8f"/>
<path d="M1232.5,563.3 L1230.0,556.1 L1402.2,528.2 L1403.2,531.1 Z" fill="#929292"/>
<path d="M1231.2,559.7 L1228.9,552.4 L1401.8,526.7 L1402.7,529.7 Z" fill="#959595"/>
<path d="M1230.0,556.1 L1227.9,548.6 L1401.5,525.2 L1402.2,528.2 Z" fill="#979797"/>
<path d="M1228.9,552.4 L1227.0,544.7 L1401.1,523.6 L1401.8,526.7 Z" fill="#9a9a9a"/>
<path d="M1227.9,548.6 L1226.2,540.7 L1400.8,522.0 L1401.5,525.2 Z" fill="#9d9d9d"/>
<path d="M1227.0,544.7 L1225.5,536.7 L1400.6,520.3 L1401.1,523.6 Z" fill="#9f9f9f"/>
<path d="M1226.2,540.7 L1224.9,532.6 L1400.4,518.6 L1400.8,522.0 Z" fill="#a2a2a2"/>
<path d="M1225.5,536.7 L1224.4,528.4 L1400.2,516.9 L1400.6,520.3 Z" fill="#a4a4a4"/>
<path d="M1224.9,532.6 L1224.0,524.1 L1400.1,515.2 L1400.4,518.6 Z" fill="#a7a7a7"/>
<path d="M1224.4,528.4 L1223.7,519.8 L1400.0,513.4 L1400.2,516.9 Z" fill="#a9a9a9"/>
<path d="M1224.0,524.1 L1223.5,515.4 L1400.0,511.6 L1400.1,515.2 Z" fill="#ababab"/>
<path d="M1223.7,519.8 L1223.4,510.9 L1400.0,509.8 L1400.0,513.4 Z" fill="#aeaeae"/>
<path d="M1223.5,515.4 L1223.4,506.4 L1400.1,508.0 L1400.0,511.6 Z" fill="#b0b0b0"/>
<path d="M1223.4,510.9 L1223.6,501.8 L1400.2,506.1 L1400.0,509.8 Z" fill="#b2b2b2"/>
<path d="M1223.4,506.4 L1223.8,497.2 L1400.3,504.2 L1400.1,508.0 Z" fill="#b4b4b4"/>
<path d="M1223.6,501.8 L1224.1,492.5 L1400.5,502.3 L1400.2,506.1 Z" fill="#b6b6b6"/>
<path d="M1223.8,497.2 L1224.5,487.8 L1400.7,500.4 L1400.3,504.2 Z" fill="#b8b8b8"/>
<path d="M1224.1,492.5 L1225.0,483.0 L1400.9,498.5 L1400.5,502.3 Z" fill="#bababa"/>
<path d="M1224.5,487.8 L1225.6,478.2 L1401.2,496.5 L1400.7,500.4 Z" fill="#bcbcbc"/>
<path d="M1225.0,483.0 L1226.4,473.3 L1401.6,494.6 L1400.9,498.5 Z" fill="#bebebe"/>
<path d="M1225.6,478.2 L1227.2,468.4 L1401.9,492.6 L1401.2,496.5 Z" fill="#bfbfbf"/>
<path d="M1226.4,473.3 L1228.1,463.5 L1402.4,490.6 L1401.6,494.6 Z" fill="#c1c1c1"/>
<path d="M1227.2,468.4 L1229.1,458.6 L1402.8,488.6 L1401.9,492.6 Z" fill="#c3c3c3"/>
<path d="M1228.1,463.5 L1230.2,453.6 L1403.3,486.6 L1402.4,490.6 Z" fill="#c4c4c4"/>
<path d="M1229.1,458.6 L1231.4,448.7 L1403.9,484.6 L1402.8,488.6 Z" fill="#c6c6c6"/>
<path d="M1230.2,453.6 L1232.7,443.7 L1404.4,482.6 L1403.3,486.6 Z" fill="#c7c7c7"/>
<path d="M1231.4,448.7 L1234.1,438.6 L1405.1,480.6 L1403.9,484.6 Z" fill="#c8c8c8"/>
<path d="M1232.7,443.7 L1235.6,433.6 L1405.7,478.5 L1404.4,482.6 Z" fill="#cacaca"/>
<path d="M1234.1,438.6 L1237.2,428.6 L1406.4,476.5 L1405.1,480.6 Z" fill="#cbcbcb"/>
<path d="M1235.6,433.6 L1238.9,423.6 L1407.1,474.5 L1405.7,478.5 Z" fill="#cccccc"/>
<path d="M1237.2,428.6 L1240.7,418.5 L1407.9,472.4 L1406.4,476.5 Z" fill="#cdcdcd"/>
<path d="M1238.9,423.6 L1242.6,413.5 L1408.7,470.4 L1407.1,474.5 Z" fill="#cecece"/>
<path d="M1240.7,418.5 L1244.5,408.5 L1409.6,468.4 L1407.9,472.4 Z" fill="#cfcfcf"/>
<path d="M1242.6,413.5 L1246.5,403.5 L1410.4,466.4 L1408.7,470.4 Z" fill="#d0d0d0"/>
<path d="M1244.5,408.5 L1248.7,398.5 L1411.3,464.4 L1409.6,468.4 Z" fill="#d0d0d0"/>
<path d="M1246.5,403.5 L1250.9,393.5 L1412.3,462.4 L1410.4,466.4 Z" fill="#d1d1d1"/>
<path d="M1248.7,398.5 L1253.2,388.6 L1413.3,460.4 L1411.3,464.4 Z" fill="#d2d2d2"/>
<path d="M1250.9,393.5 L1255.5,383.7 L1414.3,458.4 L1412.3,462.4 Z" fill="#d2d2d2"/>
<path d="M1253.2,388.6 L1258.0,378.8 L1415.3,456.4 L1413.3,460.4 Z" fill="#d2d2d2"/>
<path d="M1255.5,383.7 L1260.5,373.9 L1416.4,454.5 L1414.3,458.4 Z" fill="#d3d3d3"/>
<path d="M1258.0,378.8 L1263.1,369.1 L1417.5,452.5 L1415.3,456.4 Z" fill="#d3d3d3"/>
<path d="M1260.5,373.9 L1265.8,364.3 L1418.6,450.6 L1416.4,454.5 Z" fill="#d3d3d3"/>
<path d="M1263.1,369.1 L1268.6,359.5 L1419.8,448.7 L1417.5,452.5 Z" fill="#d3d3d3"/>
<path d="M1265.8,364.3 L1271.4,354.8 L1421.0,446.8 L1418.6,450.6 Z" fill="#d3d3d3"/>
<path d="M1268.6,359.5 L1274.3,350.1 L1422.2,444.9 L1419.8,448.7 Z" fill="#d3d3d3"/>
<path d="M1271.4,354.8 L1277.3,345.5 L1423.4,443.1 L1421.0,446.8 Z" fill="#d3d3d3"/>
<path d="M1274.3,350.1 L1280.3,341.0 L1424.7,441.3 L1422.2,444.9 Z" fill="#d3d3d3"/>
<path d="M1277.3,345.5 L1283.4,336.5 L1426.0,439.5 L1423.4,443.1 Z" fill="#d2d2d2"/>
<path d="M1280.3,341.0 L1286.5,332.0 L1427.3,437.7 L1424.7,441.3 Z" fill="#d2d2d2"/>
<path d="M1283.4,336.5 L1289.7,327.7 L1428.7,435.9 L1426.0,439.5 Z" fill="#d2d2d2"/>
<path d="M1286.5,332.0 L1293.0,323.4 L1430.0,434.2 L1427.3,437.7 Z" fill="#d1d1d1"/>
<path d="M1289.7,327.7 L1296.3,319.1 L1431.4,432.5 L1428.7,435.9 Z" fill="#d0d0d0"/>
<path d="M1293.0,323.4 L1299.7,315.0 L1432.8,430.9 L1430.0,434.2 Z" fill="#d0d0d0"/>
<path d="M1296.3,319.1 L1303.1,310.9 L1434.3,429.2 L1431.4,432.5 Z" fill="#cfcfcf"/>
<path d="M1299.7,315.0 L1306.6,306.9 L1435.7,427.6 L1432.8,430.9 Z" fill="#cecece"/>
<path d="M1303.1,310.9 L1310.1,302.9 L1437.2,426.1 L1434.3,429.2 Z" fill="#cdcdcd"/>
<path d="M1306.6,306.9 L1313.7,299.1 L1438.6,424.5 L1435.7,427.6 Z" fill="#cccccc"/>
<path d="M1310.1,302.9 L1317.2,295.3 L1440.1,423.0 L1437.2,426.1 Z" fill="#cbcbcb"/>
<path d="M1313.7,299.1 L1320.9,291.6 L1441.6,421.6 L1438.6,424.5 Z" fill="#cacaca"/>
<path d="M1317.2,295.3 L1324.5,288.1 L1443.2,420.1 L1440.1,423.0 Z" fill="#c8c8c8"/>
<path d="M1320.9,291.6 L1328.2,284.6 L1444.7,418.8 L1441.6,421.6 Z" fill="#c7c7c7"/>
<path d="M1324.5,288.1 L1332.0,281.2 L1446.2,417.4 L1443.2,420.1 Z" fill="#c6c6c6"/>
<path d="M1328.2,284.6 L1335.7,277.9 L1447.8,416.1 L1444.7,418.8 Z" fill="#c4c4c4"/>
<path d="M1332.0,281.2 L1339.5,274.7 L1449.4,414.8 L1446.2,417.4 Z" fill="#c3c3c3"/>
<path d="M1335.7,277.9 L1343.3,271.6 L1450.9,413.6 L1447.8,416.1 Z" fill="#c1c1c1"/>
<path d="M1339.5,274.7 L1347.1,268.6 L1452.5,412.4 L1449.4,414.8 Z" fill="#bfbfbf"/>
<path d="M1343.3,271.6 L1351.0,265.7 L1454.1,411.3 L1450.9,413.6 Z" fill="#bebebe"/>
<path d="M1347.1,268.6 L1354.8,263.0 L1455.7,410.2 L1452.5,412.4 Z" fill="#bcbcbc"/>
<path d="M1351.0,265.7 L1358.7,260.3 L1457.3,409.1 L1454.1,411.3 Z" fill="#bababa"/>
<path d="M1354.8,263.0 L1362.6,257.8 L1458.9,408.1 L1455.7,410.2 Z" fill="#b8b8b8"/>
<path d="M1358.7,260.3 L1366.5,255.3 L1460.5,407.2 L1457.3,409.1 Z" fill="#b6b6b6"/>
<path d="M1362.6,257.8 L1370.3,253.0 L1462.1,406.3 L1458.9,408.1 Z" fill="#b4b4b4"/>
<path d="M1366.5,255.3 L1374.2,250.8 L1463.7,405.4 L1460.5,407.2 Z" fill="#b2b2b2"/>
<path d="M1370.3,253.0 L1378.1,248.7 L1465.2,404.6 L1462.1,406.3 Z" fill="#b0b0b0"/>
<path d="M1374.2,250.8 L1382.0,246.8 L1466.8,403.8 L1463.7,405.4 Z" fill="#aeaeae"/>
<path d="M1378.1,248.7 L1385.9,245.0 L1468.4,403.1 L1465.2,404.6 Z" fill="#ababab"/>
<path d="M1382.0,246.8 L1389.7,243.2 L1470.0,402.5 L1466.8,403.8 Z" fill="#a9a9a9"/>
<path d="M1385.9,245.0 L1393.6,241.7 L1471.6,401.8 L1468.4,403.1 Z" fill="#a7a7a7"/>
<path d="M1389.7,243.2 L1397.4,240.2 L1473.2,401.3 L1470.0,402.5 Z" fill="#a4a4a4"/>
<path d="M1393.6,241.7 L1401.2,238.9 L1474.7,400.8 L1471.6,401.8 Z" fill="#a2a2a2"/>
<path d="M1397.4,240.2 L1405.0,237.6 L1476.3,400.3 L1473.2,401.3 Z" fill="#9f9f9f"/>
<path d="M1401.2,238.9 L1408.8,236.6 L1477.8,399.9 L1474.7,400.8 Z" fill="#9d9d9d"/>
<path d="M1405.0,237.6 L1412.6,235.6 L1479.3,399.5 L1476.3,400.3 Z" fill="#9a9a9a"/>
<path d="M1408.8,236.6 L1416.3,234.8 L1480.8,399.2 L1477.8,399.9 Z" fill="#979797"/>
<path d="M1412.6,235.6 L1420.0,234.1 L1482.4,399.0 L1479.3,399.5 Z" fill="#959595"/>
<path d="M1416.3,234.8 L1423.6,233.5 L1483.8,398.8 L1480.8,399.2 Z" fill="#929292"/>
<path d="M1420.0,234.1 L1427.3,233.1 L1485.3,398.6 L1482.4,399.0 Z" fill="#8f8f8f"/>
<path d="M1423.6,233.5 L1430.9,232.8 L1486.8,398.6 L1483.8,398.8 Z" fill="#8c8c8c"/>
<path d="M1427.3,233.1 L1434.4,232.6 L1488.2,398.5 L1485.3,398.6 Z" fill="#898989"/>
<path d="M1430.9,232.8 L1437.9,232.6 L1489.6,398.5 L1486.8,398.6 Z" fill="#878787"/>
<path d="M1434.4,232.6 L1441.4,232.7 L1491.0,398.6 L1488.2,398.5 Z" fill="#848484"/>
<path d="M1437.9,232.6 L1444.8,232.9 L1492.4,398.7 L1489.6,398.5 Z" fill="#818181"/>
<path d="M1441.4,232.7 L1448.1,233.3 L1493.8,398.9 L1491.0,398.6 Z" fill="#7e7e7e"/>
<path d="M1444.8,232.9 L1451.4,233.8 L1495.1,399.1 L1492.4,398.7 Z" fill="#7b7b7b"/>
<path d="M1448.1,233.3 L1454.7,234.4 L1496.4,399.4 L1493.8,398.9 Z" fill="#787878"/>
<path d="M1451.4,233.8 L1457.9,235.1 L1497.7,399.7 L1495.1,399.1 Z" fill="#757575"/>
<path d="M1454.7,234.4 L1461.0,236.0 L1499.0,400.1 L1496.4,399.4 Z" fill="#727272"/>
<path d="M1457.9,235.1 L1464.1,237.0 L1500.2,400.5 L1497.7,399.7 Z" fill="#6f6f6f"/>
<path d="M1461.0,236.0 L1467.1,238.2 L1501.4,401.0 L1499.0,400.1 Z" fill="#6c6c6c"/>
<path d="M1464.1,237.0 L1470.1,239.4 L1502.6,401.6 L1500.2,400.5 Z" fill="#696969"/>
<path d="M1467.1,238.2 L1473.0,240.8 L1503.7,402.1 L1501.4,401.0 Z" fill="#666666"/>
<path d="M1470.1,239.4 L1475.8,242.3 L1504.9,402.8 L1502.6,401.6 Z" fill="#636363"/>
<path d="M1473.0,240.8 L1478.5,244.0 L1506.0,403.5 L1503.7,402.1 Z" fill="#5f5f5f"/>
<path d="M1056.4,413.6 L1056.4,412.1 L1056.4,410.6 L1056.5,409.1 L1056.5,407.6 L1056.5,406.0 L1056.6,404.5 L1056.7,402.9 L1056.8,401.4 L1056.8,399.8 L1057.0,398.3 L1057.1,396.7 L1057.2,395.1 L1057.3,393.6 L1057.5,392.0 L1057.6,390.4 L1057.8,388.8 L1058.0,387.2 L1058.2,385.6 L1058.4,384.0 L1058.6,382.4 L1058.8,380.8 L1059.1,379.2 L1059.3,377.6 L1059.6,375.9 L1059.9,374.3 L1060.2,372.7 L1060.5,371.0 L1060.8,369.4 L1061.1,367.8 L1061.4,366.1 L1061.7,364.5 L1062.1,362.8 L1062.5,361.2 L1062.8,359.5 L1063.2,357.9 L1063.6,356.2 L1064.0,354.5 L1064.4,352.9 L1064.8,351.2 L1065.3,349.6 L1065.7,347.9 L1066.2,346.2 L1066.6,344.5 L1067.1,342.9 L1067.6,341.2 L1068.1,339.5 L1068.6,337.9 L1069.1,336.2 L1069.7,334.5 L1070.2,332.8 L1070.8,331.2 L1071.3,329.5 L1071.9,327.8 L1072.5,326.1 L1073.1,324.4 L1073.7,322.8 L1074.3,321.1 L1074.9,319.4 L1075.5,317.7 L1076.2,316.1 L1076.8,314.4 L1077.5,312.7 L1078.2,311.1 L1078.8,309.4 L1079.5,307.7 L1080.2,306.1 L1080.9,304.4 L1081.6,302.7 L1082.4,301.1 L1083.1,299.4 L1083.9,297.8 L1084.6,296.1 L1085.4,294.5 L1086.2,292.8 L1086.9,291.2 L1087.7,289.5 L1088.5,287.9 L1089.3,286.3 L1090.2,284.6 L1091.0,283.0 L1091.8,281.4 L1092.7,279.7 L1093.5,278.1 L1094.4,276.5 L1095.2,274.9 L1096.1,273.3 L1097.0,271.7 L1097.9,270.1 L1098.8,268.5 L1099.7,266.9 L1100.6,265.3 L1101.6,263.7 L1102.5,262.2 L1103.4,260.6 L1104.4,259.0 L1105.3,257.5 L1106.3,255.9 L1107.3,254.4 L1108.3,252.8 L1109.2,251.3 L1110.2,249.8 L1111.2,248.2 L1112.3,246.7 L1113.3,245.2 L1114.3,243.7 L1115.3,242.2 L1116.4,240.7 L1117.4,239.2 L1118.5,237.7 L1119.5,236.3 L1120.6,234.8 L1121.6,233.4 L1122.7,231.9 L1123.8,230.5 L1124.9,229.0 L1126.0,227.6 L1127.1,226.2 L1128.2,224.8 L1129.3,223.4 L1130.4,222.0 L1131.5,220.6 L1132.7,219.2 L1133.8,217.8 L1135.0,216.5 L1136.1,215.1 L1137.2,213.8 L1138.4,212.4 L1139.6,211.1 L1140.7,209.8 L1141.9,208.5 L1143.1,207.2 L1144.3,205.9 L1145.4,204.6 L1146.6,203.3 L1147.8,202.1 L1149.0,200.8 L1150.2,199.6 L1151.4,198.3 L1152.6,197.1 L1153.9,195.9 L1155.1,194.7 L1156.3,193.5 L1157.5,192.3 L1158.8,191.1 L1160.0,190.0 L1161.2,188.8 L1162.5,187.7 L1163.7,186.5 L1165.0,185.4 L1166.2,184.3 L1167.5,183.2 L1168.7,182.1 L1170.0,181.0 L1171.2,180.0 L1172.5,178.9 L1173.8,177.9 L1175.0,176.9 L1176.3,175.8 L1177.6,174.8 L1178.8,173.8 L1180.1,172.9 L1181.4,171.9 L1182.7,170.9 L1184.0,170.0 L1185.2,169.0 L1186.5,168.1 L1187.8,167.2 L1189.1,166.3 L1190.4,165.4 L1191.7,164.5 L1193.0,163.7 L1194.3,162.8 L1195.6,162.0 L1196.9,161.2 L1198.1,160.4 L1199.4,159.6 L1200.7,158.8 L1202.0,158.0 L1203.3,157.3 L1204.6,156.5 L1205.9,155.8 L1207.2,155.1 L1208.5,154.4 L1209.8,153.7 L1211.1,153.0 L1212.4,152.3 L1213.7,151.7 L1215.0,151.0 L1216.3,150.4 L1217.6,149.8 L1218.9,149.2 L1220.1,148.6 L1221.4,148.0 L1222.7,147.5 L1224.0,146.9 L1225.3,146.4 L1226.6,145.9 L1227.8,145.4 L1229.1,144.9 L1230.4,144.4 L1231.7,144.0 L1233.0,143.5 L1234.2,143.1 L1235.5,142.7 L1236.8,142.3 L1238.0,141.9 L1239.3,141.5 L1240.5,141.1 L1241.8,140.8 L1243.1,140.5 L1244.3,140.1 L1245.6,139.8 L1246.8,139.6 L1248.0,139.3 L1249.3,139.0 L1250.5,138.8 L1251.7,138.5 L1253.0,138.3 L1254.2,138.1 L1255.4,137.9 L1256.6,137.8 L1257.8,137.6 L1259.1,137.5 L1260.3,137.3 L1261.5,137.2 L1262.7,137.1 L1263.8,137.0 L1265.0,137.0 L1266.2,136.9 L1267.4,136.9 L1268.6,136.8 L1269.7,136.8 L1270.9,136.8 L1272.0,136.8 L1273.2,136.9 L1274.3,136.9 L1275.5,137.0 L1276.6,137.1 L1277.8,137.1 L1278.9,137.3 L1280.0,137.4 L1281.1,137.5 L1282.2,137.7 L1283.3,137.8 L1284.4,138.0 L1285.5,138.2 L1286.6,138.4 L1287.7,138.6 L1288.8,138.9 L1289.8,139.1 L1290.9,139.4 L1291.9,139.6 L1293.0,139.9 L1294.0,140.2 L1295.1,140.6 L1296.1,140.9 L1297.1,141.3 L1298.1,141.6 L1299.1,142.0 L1300.1,142.4 L1301.1,142.8 L1302.1,143.2 L1303.1,143.7 L1304.0,144.1 L1305.0,144.6 L1305.9,145.1 L1306.9,145.5 L1307.8,146.1 L1308.8,146.6 L1475.8,242.3 L1476.7,242.9 L1477.6,243.4 L1478.5,244.0 L1479.4,244.6 L1480.3,245.2 L1481.2,245.8 L1482.1,246.4 L1482.9,247.0 L1483.8,247.6 L1484.6,248.3 L1485.5,249.0 L1486.3,249.7 L1487.1,250.4 L1487.9,251.1 L1488.7,251.8 L1489.5,252.5 L1490.3,253.3 L1491.1,254.0 L1491.9,254.8 L1492.6,255.6 L1493.4,256.4 L1494.1,257.2 L1494.8,258.1 L1495.6,258.9 L1496.3,259.7 L1497.0,260.6 L1497.7,261.5 L1498.3,262.4 L1499.0,263.3 L1499.7,264.2 L1500.3,265.1 L1501.0,266.1 L1501.6,267.0 L1502.2,268.0 L1502.9,269.0 L1503.5,269.9 L1504.1,270.9 L1504.6,272.0 L1505.2,273.0 L1505.8,274.0 L1506.3,275.1 L1506.9,276.1 L1507.4,277.2 L1507.9,278.3 L1508.5,279.3 L1509.0,280.5 L1509.4,281.6 L1509.9,282.7 L1510.4,283.8 L1510.9,285.0 L1511.3,286.1 L1511.8,287.3 L1512.2,288.5 L1512.6,289.7 L1513.0,290.8 L1513.4,292.1 L1513.8,293.3 L1514.2,294.5 L1514.5,295.7 L1514.9,297.0 L1515.2,298.2 L1515.6,299.5 L1515.9,300.8 L1516.2,302.1 L1516.5,303.4 L1516.8,304.7 L1517.1,306.0 L1517.3,307.3 L1517.6,308.6 L1517.8,310.0 L1518.1,311.3 L1518.3,312.7 L1518.5,314.1 L1518.7,315.4 L1518.9,316.8 L1519.1,318.2 L1519.2,319.6 L1519.4,321.0 L1519.5,322.4 L1519.6,323.8 L1519.8,325.3 L1519.9,326.7 L1520.0,328.2 L1520.1,329.6 L1520.1,331.1 L1520.2,332.5 L1520.3,334.0 L1520.3,335.5 L1520.3,337.0 L1522.0,439.8 L1522.0,440.4 L1522.0,441.0 L1522.0,441.6 L1522.0,442.2 L1522.0,442.8 L1522.0,443.4 L1521.9,444.0 L1521.9,444.6 L1521.9,445.3 L1521.8,445.9 L1521.8,446.5 L1521.8,447.1 L1521.7,447.8 L1521.7,448.4 L1521.6,449.0 L1521.5,449.7 L1521.5,450.3 L1521.4,450.9 L1521.3,451.6 L1521.2,452.2 L1521.2,452.9 L1521.1,453.5 L1521.0,454.2 L1520.9,454.8 L1520.8,455.5 L1520.7,456.1 L1520.5,456.8 L1520.4,457.4 L1520.3,458.1 L1520.2,458.7 L1520.1,459.4 L1519.9,460.1 L1519.8,460.7 L1519.6,461.4 L1519.5,462.0 L1519.3,462.7 L1519.2,463.4 L1519.0,464.0 L1518.8,464.7 L1518.7,465.4 L1518.5,466.1 L1518.3,466.7 L1518.1,467.4 L1517.9,468.1 L1517.8,468.7 L1517.6,469.4 L1517.4,470.1 L1517.1,470.8 L1516.9,471.4 L1516.7,472.1 L1516.5,472.8 L1516.3,473.5 L1516.1,474.1 L1515.8,474.8 L1515.6,475.5 L1515.3,476.2 L1515.1,476.8 L1514.9,477.5 L1514.6,478.2 L1514.3,478.9 L1514.1,479.6 L1513.8,480.2 L1513.6,480.9 L1513.3,481.6 L1513.0,482.3 L1512.7,482.9 L1512.4,483.6 L1512.2,484.3 L1511.9,484.9 L1511.6,485.6 L1511.3,486.3 L1511.0,487.0 L1510.7,487.6 L1510.3,488.3 L1510.0,489.0 L1509.7,489.6 L1509.4,490.3 L1509.1,491.0 L1508.7,491.6 L1508.4,492.3 L1508.1,492.9 L1507.7,493.6 L1507.4,494.3 L1507.0,494.9 L1506.7,495.6 L1506.3,496.2 L1506.0,496.9 L1505.6,497.5 L1505.2,498.2 L1504.9,498.8 L1504.5,499.5 L1504.1,500.1 L1503.8,500.8 L1503.4,501.4 L1503.0,502.0 L1502.6,502.7 L1502.2,503.3 L1501.8,503.9 L1501.4,504.6 L1501.0,505.2 L1500.6,505.8 L1500.2,506.4 L1499.8,507.1 L1499.4,507.7 L1499.0,508.3 L1498.6,508.9 L1498.1,509.5 L1497.7,510.1 L1497.3,510.7 L1496.9,511.3 L1496.4,511.9 L1496.0,512.5 L1495.6,513.1 L1495.1,513.7 L1494.7,514.3 L1494.2,514.9 L1493.8,515.5 L1493.3,516.1 L1492.9,516.6 L1492.4,517.2 L1492.0,517.8 L1491.5,518.3 L1491.0,518.9 L1490.6,519.5 L1490.1,520.0 L1489.6,520.6 L1489.2,521.1 L1488.7,521.7 L1488.2,522.2 L1487.7,522.8 L1487.3,523.3 L1486.8,523.8 L1486.3,524.4 L1485.8,524.9 L1485.3,525.4 L1484.8,525.9 L1484.3,526.5 L1483.9,527.0 L1483.4,527.5 L1482.9,528.0 L1482.4,528.5 L1481.9,529.0 L1481.4,529.5 L1480.9,530.0 L1480.4,530.4 L1479.9,530.9 L1479.3,531.4 L1478.8,531.9 L1478.3,532.3 L1477.8,532.8 L1477.3,533.2 L1476.8,533.7 L1476.3,534.2 L1475.8,534.6 L1475.2,535.0 L1474.7,535.5 L1474.2,535.9 L1473.7,536.3 L1473.2,536.8 L1472.6,537.2 L1472.1,537.6 L1471.6,538.0 L1471.1,538.4 L1470.5,538.8 L1470.0,539.2 L1469.5,539.6 L1469.0,540.0 L1468.4,540.3 L1467.9,540.7 L1467.4,541.1 L1466.9,541.4 L1466.3,541.8 L1465.8,542.2 L1465.3,542.5 L1464.7,542.9 L1464.2,543.2 L1463.7,543.5 L1463.1,543.9 L1462.6,544.2 L1462.1,544.5 L1461.5,544.8 L1373.4,596.4 L1372.1,597.1 L1370.8,597.8 L1369.5,598.6 L1368.3,599.3 L1367.0,600.0 L1365.7,600.6 L1364.4,601.3 L1363.1,602.0 L1361.8,602.6 L1360.5,603.2 L1359.2,603.8 L1357.9,604.4 L1356.6,605.0 L1355.3,605.6 L1354.0,606.1 L1352.8,606.7 L1351.5,607.2 L1350.2,607.7 L1348.9,608.2 L1347.6,608.7 L1346.4,609.2 L1345.1,609.7 L1343.8,610.1 L1342.5,610.5 L1341.3,610.9 L1340.0,611.3 L1338.7,611.7 L1337.5,612.1 L1336.2,612.5 L1335.0,612.8 L1333.7,613.2 L1332.5,613.5 L1331.2,613.8 L1330.0,614.1 L1328.7,614.3 L1327.5,614.6 L1326.2,614.8 L1325.0,615.1 L1323.8,615.3 L1322.6,615.5 L1321.3,615.7 L1320.1,615.8 L1318.9,616.0 L1317.7,616.1 L1316.5,616.3 L1315.3,616.4 L1314.1,616.5 L1312.9,616.6 L1311.7,616.6 L1310.5,616.7 L1309.4,616.7 L1308.2,616.8 L1307.0,616.8 L1305.9,616.8 L1304.7,616.8 L1303.6,616.7 L1302.4,616.7 L1301.3,616.6 L1300.1,616.6 L1299.0,616.5 L1297.9,616.4 L1296.8,616.2 L1295.6,616.1 L1294.5,616.0 L1293.4,615.8 L1292.3,615.6 L1291.2,615.4 L1290.2,615.2 L1289.1,615.0 L1288.0,614.8 L1286.9,614.5 L1285.9,614.2 L1284.8,614.0 L1283.8,613.7 L1282.7,613.4 L1281.7,613.0 L1280.7,612.7 L1279.7,612.4 L1278.7,612.0 L1277.6,611.6 L1276.7,611.2 L1275.7,610.8 L1274.7,610.4 L1273.7,609.9 L1272.7,609.5 L1271.8,609.0 L1270.8,608.6 L1269.9,608.1 L1268.9,607.6 L1268.0,607.0 L1101.0,511.3 L1100.1,510.7 L1099.2,510.2 L1098.2,509.6 L1097.4,509.0 L1096.5,508.5 L1095.6,507.9 L1094.7,507.2 L1093.8,506.6 L1093.0,506.0 L1092.1,505.3 L1091.3,504.6 L1090.5,504.0 L1089.6,503.3 L1088.8,502.5 L1088.0,501.8 L1087.2,501.1 L1086.5,500.3 L1085.7,499.6 L1084.9,498.8 L1084.1,498.0 L1083.4,497.2 L1082.7,496.4 L1081.9,495.6 L1081.2,494.7 L1080.5,493.9 L1079.8,493.0 L1079.1,492.1 L1078.4,491.2 L1077.7,490.3 L1077.1,489.4 L1076.4,488.5 L1075.8,487.5 L1075.1,486.6 L1074.5,485.6 L1073.9,484.7 L1073.3,483.7 L1072.7,482.7 L1072.1,481.7 L1071.5,480.6 L1071.0,479.6 L1070.4,478.6 L1069.9,477.5 L1069.3,476.4 L1068.8,475.4 L1068.3,474.3 L1067.8,473.2 L1067.3,472.0 L1066.8,470.9 L1066.4,469.8 L1065.9,468.6 L1065.4,467.5 L1065.0,466.3 L1064.6,465.1 L1064.2,464.0 L1063.8,462.8 L1063.4,461.6 L1063.0,460.3 L1062.6,459.1 L1062.2,457.9 L1061.9,456.6 L1061.5,455.4 L1061.2,454.1 L1060.9,452.8 L1060.6,451.5 L1060.3,450.2 L1060.0,448.9 L1059.7,447.6 L1059.4,446.3 L1059.2,445.0 L1058.9,443.6 L1058.7,442.3 L1058.5,440.9 L1058.3,439.6 L1058.1,438.2 L1057.9,436.8 L1057.7,435.4 L1057.5,434.0 L1057.4,432.6 L1057.2,431.2 L1057.1,429.8 L1057.0,428.3 L1056.9,426.9 L1056.8,425.4 L1056.7,424.0 L1056.6,422.5 L1056.6,421.1 L1056.5,419.6 L1056.5,418.1 L1056.4,416.6 L1056.4,415.1 Z" fill="none" stroke="#111" stroke-width="1.6"/>
<ellipse cx="1461.0" cy="476.0" rx="85.3" ry="49.4" transform="rotate(-59.07 1461.0 476.0)" fill="#858585" stroke="#1a1a1a" stroke-width="1.5"/>
<ellipse cx="1461.0" cy="476.0" rx="78.8" ry="42.9" transform="rotate(-59.07 1461.0 476.0)" fill="#adadad" stroke="#1a1a1a" stroke-width="1.5"/>
<path d="M1505.9,411.7 L1507.0,412.8 L1508.0,414.1 L1509.0,415.3 L1509.9,416.7 L1510.7,418.2 L1511.5,419.7 L1512.2,421.3 L1512.9,422.9 L1513.5,424.7 L1514.0,426.5 L1514.5,428.3 L1514.9,430.2 L1515.2,432.2 L1515.4,434.2 L1515.6,436.3 L1515.7,438.5 L1515.7,440.7 L1515.7,442.9 L1515.6,445.2 L1515.4,447.5 L1515.2,449.8 L1514.9,452.2 L1514.5,454.6 L1514.1,457.1 L1513.5,459.5 L1513.0,462.0 L1512.3,464.5 L1511.6,467.0 L1510.8,469.6 L1510.0,472.1 L1509.1,474.6 L1508.1,477.2 L1507.1,479.7 L1506.0,482.3 L1504.8,484.8 L1503.6,487.3 L1502.4,489.8 L1501.1,492.3 L1499.7,494.8 L1498.3,497.2 L1496.8,499.6 L1495.3,502.0 L1493.8,504.4 L1492.2,506.7 L1490.6,509.0 L1488.9,511.2 L1487.2,513.4 L1485.5,515.5 L1483.7,517.6 L1481.9,519.7 L1480.1,521.6 L1478.2,523.6 L1476.4,525.4 L1474.5,527.2 L1472.6,529.0 L1470.6,530.6 L1468.7,532.2 L1466.8,533.7 L1464.8,535.2 L1462.9,536.6 L1460.9,537.9 L1458.9,539.1 L1457.0,540.2 L1455.0,541.3 L1453.1,542.2 L1451.2,543.1 L1449.2,543.9 L1447.3,544.6 L1445.4,545.3 L1443.6,545.8 L1441.7,546.2 L1439.9,546.6 L1438.1,546.9 L1436.4,547.0 L1434.6,547.1 L1432.9,547.1 L1431.3,547.0 L1429.6,546.8 L1428.0,546.6 L1426.5,546.2 Q1476.0,485.0 1505.9,411.7 Z" fill="#2b2b2b" stroke="#222" stroke-width="0.8"/>
<ellipse cx="1461.0" cy="476.0" rx="78.8" ry="42.9" transform="rotate(-59.07 1461.0 476.0)" fill="none" stroke="#1a1a1a" stroke-width="1.4"/>
<path d="M1268.0,607.0 L1266.4,606.1 L1264.7,605.0 L1263.1,604.0 L1261.6,602.9 L1260.0,601.7 L1258.5,600.5 L1257.0,599.3 L1255.5,598.0 L1254.1,596.7 L1252.7,595.3 L1251.3,593.9 L1250.0,592.5 L1248.7,591.0 L1247.4,589.5 L1246.1,587.9 L1244.9,586.3 L1243.7,584.6 L1242.5,582.9 L1241.4,581.2 L1240.3,579.4 L1239.3,577.6 L1238.2,575.8 L1237.2,573.9 L1236.3,572.0 L1235.3,570.0 L1234.4,568.0 L1233.6,566.0 L1232.7,564.0 L1231.9,561.9 L1231.2,559.7 L1230.5,557.6 L1229.8,555.4 L1229.1,553.1 L1228.5,550.9 L1227.9,548.6 L1227.3,546.3 L1226.8,543.9 L1226.4,541.5 L1225.9,539.1 L1225.5,536.7 L1225.1,534.2 L1224.8,531.7 L1224.5,529.2 L1224.2,526.7 L1224.0,524.1 L1223.8,521.5 L1223.7,518.9 L1223.6,516.3 L1223.5,513.6 L1223.4,510.9 L1223.4,508.2 L1223.5,505.5 L1223.5,502.7 L1223.6,500.0 L1223.8,497.2 L1223.9,494.4 L1224.2,491.5 L1224.4,488.7 L1224.7,485.9 L1225.0,483.0 L1225.4,480.1 L1225.8,477.2 L1226.2,474.3 L1226.7,471.4 L1227.2,468.4 L1227.7,465.5 L1228.3,462.5 L1228.9,459.6 L1229.5,456.6 L1230.2,453.6 L1230.9,450.6 L1231.7,447.7 L1232.5,444.7 L1233.3,441.7 L1234.1,438.6 L1235.0,435.6 L1236.0,432.6 L1236.9,429.6 L1237.9,426.6 L1238.9,423.6 L1240.0,420.6 L1241.1,417.5 L1242.2,414.5 L1243.3,411.5 L1244.5,408.5 L1245.7,405.5 L1247.0,402.5 L1248.2,399.5 L1249.5,396.5 L1250.9,393.5 L1252.2,390.6 L1253.6,387.6 L1255.1,384.6 L1256.5,381.7 L1258.0,378.8 L1259.5,375.8 L1261.0,372.9 L1262.6,370.0 L1264.2,367.1 L1265.8,364.3 L1267.5,361.4 L1269.1,358.6 L1270.8,355.7 L1272.6,352.9 L1274.3,350.1 L1276.1,347.4 L1277.9,344.6 L1279.7,341.9 L1281.5,339.2 L1283.4,336.5 L1285.3,333.8 L1287.2,331.2 L1289.1,328.5 L1291.0,325.9 L1293.0,323.4 L1295.0,320.8 L1297.0,318.3 L1299.0,315.8 L1301.1,313.3 L1303.1,310.9 L1305.2,308.5 L1307.3,306.1 L1309.4,303.7 L1311.5,301.4 L1313.7,299.1 L1315.8,296.8 L1318.0,294.6 L1320.1,292.4 L1322.3,290.2 L1324.5,288.1 L1326.8,286.0 L1329.0,283.9 L1331.2,281.9 L1333.5,279.9 L1335.7,277.9 L1338.0,276.0 L1340.3,274.1 L1342.6,272.2 L1344.8,270.4 L1347.1,268.6 L1349.4,266.9 L1351.8,265.2 L1354.1,263.5 L1356.4,261.9 L1358.7,260.3 L1361.0,258.8 L1363.4,257.3 L1365.7,255.8 L1368.0,254.4 L1370.3,253.0 L1372.7,251.7 L1375.0,250.4 L1377.3,249.2 L1379.7,248.0 L1382.0,246.8 L1384.3,245.7 L1386.6,244.6 L1389.0,243.6 L1391.3,242.6 L1393.6,241.7 L1395.9,240.8 L1398.2,239.9 L1400.5,239.1 L1402.8,238.4 L1405.0,237.6 L1407.3,237.0 L1409.6,236.4 L1411.8,235.8 L1414.1,235.3 L1416.3,234.8 L1418.5,234.4 L1420.7,234.0 L1422.9,233.6 L1425.1,233.3 L1427.3,233.1 L1429.4,232.9 L1431.6,232.8 L1433.7,232.7 L1435.8,232.6 L1437.9,232.6 L1440.0,232.6 L1442.1,232.7 L1444.1,232.9 L1446.1,233.0 L1448.1,233.3 L1450.1,233.6 L1452.1,233.9 L1454.1,234.3 L1456.0,234.7 L1457.9,235.1 L1459.8,235.6 L1461.7,236.2 L1463.5,236.8 L1465.3,237.5 L1467.1,238.2 L1468.9,238.9 L1470.7,239.7 L1472.4,240.5 L1474.1,241.4 L1475.8,242.3" fill="none" stroke="#111" stroke-width="1.3"/>
<path d="M1272.1,609.4 L1270.4,608.4 L1268.8,607.4 L1267.2,606.3 L1265.6,605.2 L1264.1,604.1 L1262.6,602.9 L1261.1,601.6 L1259.6,600.4 L1258.2,599.0 L1256.8,597.7 L1255.4,596.3 L1254.1,594.8 L1252.7,593.3 L1251.5,591.8 L1250.2,590.2 L1249.0,588.6 L1247.8,587.0 L1246.6,585.3 L1245.5,583.5 L1244.4,581.8 L1243.3,580.0 L1242.3,578.1 L1241.3,576.2 L1240.3,574.3 L1239.4,572.4 L1238.5,570.4 L1237.6,568.3 L1236.8,566.3 L1236.0,564.2 L1235.3,562.1 L1234.5,559.9 L1233.8,557.7 L1233.2,555.5 L1232.6,553.2 L1232.0,550.9 L1231.4,548.6 L1230.9,546.2 L1230.4,543.9 L1230.0,541.5 L1229.6,539.0 L1229.2,536.6 L1228.9,534.1 L1228.6,531.5 L1228.3,529.0 L1228.1,526.4 L1227.9,523.8 L1227.8,521.2 L1227.6,518.6 L1227.6,515.9 L1227.5,513.2 L1227.5,510.5 L1227.5,507.8 L1227.6,505.0 L1227.7,502.3 L1227.9,499.5 L1228.0,496.7 L1228.2,493.9 L1228.5,491.0 L1228.8,488.2 L1229.1,485.3 L1229.5,482.4 L1229.9,479.5 L1230.3,476.6 L1230.8,473.7 L1231.3,470.8 L1231.8,467.8 L1232.4,464.9 L1233.0,461.9 L1233.6,458.9 L1234.3,456.0 L1235.0,453.0 L1235.8,450.0 L1236.6,447.0 L1237.4,444.0 L1238.2,441.0 L1239.1,438.0 L1240.0,434.9 L1241.0,431.9 L1242.0,428.9 L1243.0,425.9 L1244.1,422.9 L1245.1,419.9 L1246.3,416.8 L1247.4,413.8 L1248.6,410.8 L1249.8,407.8 L1251.0,404.8 L1252.3,401.8 L1253.6,398.8 L1255.0,395.9 L1256.3,392.9 L1257.7,389.9 L1259.1,387.0 L1260.6,384.0 L1262.1,381.1 L1263.6,378.2 L1265.1,375.2 L1266.7,372.3 L1268.3,369.5 L1269.9,366.6 L1271.6,363.7 L1273.2,360.9 L1274.9,358.1 L1276.6,355.3 L1278.4,352.5 L1280.2,349.7 L1281.9,346.9 L1283.8,344.2 L1285.6,341.5 L1287.5,338.8 L1289.3,336.1 L1291.3,333.5 L1293.2,330.9 L1295.1,328.3 L1297.1,325.7 L1299.1,323.1 L1301.1,320.6 L1303.1,318.1 L1305.1,315.6 L1307.2,313.2 L1309.3,310.8 L1311.4,308.4 L1313.5,306.0 L1315.6,303.7 L1317.7,301.4 L1319.9,299.1 L1322.1,296.9 L1324.2,294.7 L1326.4,292.5 L1328.6,290.4 L1330.8,288.3 L1333.1,286.2 L1335.3,284.2 L1337.6,282.2 L1339.8,280.2 L1342.1,278.3 L1344.4,276.4 L1346.6,274.5 L1348.9,272.7 L1351.2,271.0 L1353.5,269.2 L1355.8,267.5 L1358.1,265.8 L1360.5,264.2 L1362.8,262.6 L1365.1,261.1 L1367.4,259.6 L1369.8,258.1 L1372.1,256.7 L1374.4,255.4 L1376.8,254.0 L1379.1,252.7 L1381.4,251.5 L1383.8,250.3 L1386.1,249.1 L1388.4,248.0 L1390.7,246.9 L1393.0,245.9 L1395.4,244.9 L1397.7,244.0 L1400.0,243.1 L1402.3,242.2 L1404.6,241.4 L1406.9,240.7 L1409.1,240.0 L1411.4,239.3 L1413.7,238.7 L1415.9,238.1 L1418.1,237.6 L1420.4,237.1 L1422.6,236.7 L1424.8,236.3 L1427.0,236.0 L1429.2,235.7 L1431.4,235.4 L1433.5,235.2 L1435.7,235.1 L1437.8,235.0 L1439.9,234.9 L1442.0,234.9 L1444.1,235.0 L1446.1,235.1 L1448.2,235.2 L1450.2,235.4 L1452.2,235.6 L1454.2,235.9 L1456.2,236.2 L1458.1,236.6 L1460.1,237.0 L1462.0,237.5 L1463.9,238.0 L1465.7,238.5 L1467.6,239.1 L1469.4,239.8 L1471.2,240.5 L1473.0,241.2 L1474.7,242.0 L1476.5,242.9 L1478.2,243.7 L1479.9,244.7" fill="none" stroke="#111" stroke-width="1.3"/>
<path d="M1056.4,413.3 L1223.4,509.1" stroke="#111" stroke-width="1.5"/>
<path d="M1227.5,510.6 L1400.0,510.6" stroke="#111" stroke-width="1.5"/>
</svg>
<!--/MODEL-->
<!--CHROME2-->
<!-- triad -->
<svg class="a" style="left:1870px;top:680px" width="48" height="52" viewBox="1870 680 48 52">
<path d="M1883,715 V692" stroke="#16168a" stroke-width="2.2"/>
<path d="M1880.5,701 L1883,695 L1885.5,701 Z" fill="#16168a"/>
<path d="M1883,715 L1898,706" stroke="#1c8a1c" stroke-width="1.8"/>
<path d="M1891,709 L1896,705.5 L1893,711 Z" fill="#1c8a1c"/>
<path d="M1883,715 L1903.5,727.5" stroke="#8a1818" stroke-width="1.8"/>
<path d="M1894,719 L1900,725.5 L1894,724 Z" fill="#8a1818"/>
<path d="M1886,686.5 H1891 L1886,692.5 H1891" fill="none" stroke="#000" stroke-width="1"/>
<path d="M1900,701 L1902.5,704.5 L1905,701 M1902.5,704.5 V708" fill="none" stroke="#000" stroke-width="1"/>
<path d="M1906,721 L1911,728 M1911,721 L1906,728" fill="none" stroke="#000" stroke-width="1"/>
</svg>
<!-- tab bar -->
<div class="a" style="left:749px;top:751px;width:1169px;height:23px;background:#d4d0c8"></div>
<div class="a" style="left:749px;top:750px;width:109px;height:1px;background:#000"></div>
<div class="a" style="left:1075px;top:750px;width:843px;height:2px;background:#000"></div>
<div class="a" style="left:1074px;top:750px;width:2px;height:23px;background:#000"></div>
<div class="a" style="left:748px;top:54px;width:1px;height:720px;background:#000"></div>
<!-- inactive tab -->
<div class="a" style="left:751px;top:752px;width:107px;height:19px;border-left:1px solid #fff;border-top:1px solid #fff"></div>
<div class="a" style="left:753px;top:770px;width:105px;height:2px;background:#000"></div>
<div class="a" style="left:762px;top:753px;white-space:nowrap">Start page</div>
<div class="a" style="left:830px;top:754px;width:14px;height:14px;border-radius:2px;background:#c3c0b9;border:1px solid #b0ada6"></div>
<svg class="a" style="left:830px;top:754px" width="14" height="14" viewBox="0 0 14 14"><path d="M4,4 L10,10 M10,4 L4,10" stroke="#fff" stroke-width="2"/></svg>
<!-- active tab -->
<div class="a" style="left:858px;top:750px;width:216px;height:23px;background:#d4d0c8;border-left:1px solid #fff;border-top:1px solid #fff"></div>
<div class="a" style="left:859px;top:772px;width:217px;height:2px;background:#000"></div>
<svg class="a" style="left:868px;top:752px" width="20" height="18" viewBox="868 752 20 18">
<rect x="870" y="754" width="9" height="12" fill="#ee2200"/><path d="M872,756 H879 M872,756 V766 M872,760.5 H877" stroke="#ff8a30" stroke-width="1.2" fill="none"/>
<circle cx="881" cy="762" r="4.2" fill="#1a3fb0"/><circle cx="881" cy="762" r="5.6" fill="none" stroke="#1a3fb0" stroke-width="2" stroke-dasharray="1.8,1.3"/><circle cx="881" cy="762" r="1.6" fill="#e8f0ff"/>
</svg>
<div class="a" style="left:890px;top:753px;white-space:nowrap;font-size:13.5px">hello_world_chamber : 1*</div>
<div class="a" style="left:1048px;top:755px;width:14px;height:14px;border-radius:2px;background:#e3774f;border:1px solid #d84a30"></div>
<svg class="a" style="left:1048px;top:755px" width="14" height="14" viewBox="0 0 14 14"><path d="M4,4 L10,10 M10,4 L4,10" stroke="#fff" stroke-width="2"/></svg>
<!-- splitter lines -->
<div class="a" style="left:2px;top:774px;width:1916px;height:1px;background:#fff"></div>
<!-- report dock buttons -->
<svg class="a" style="left:1886px;top:782px" width="32" height="16" viewBox="1886 782 32 16">
<path d="M1894.5,785.5 H1898.5 V789.5 H1896.5" fill="none" stroke="#000"/>
<path d="M1894,785 H1899 V786.5 H1894 Z" fill="#000"/>
<rect x="1891.5" y="788.5" width="5" height="4.5" fill="none" stroke="#000"/>
<path d="M1891,788 H1897 V789.5 H1891 Z" fill="#000"/>
<path d="M1906.5,785.5 L1913.5,792.5 M1913.5,785.5 L1906.5,792.5" stroke="#000" stroke-width="1.5"/>
</svg>
<!-- report scrollbar -->
<div class="a checker" style="left:1900px;top:802px;width:16px;height:190px"></div>
<div class="btn" style="left:1900px;top:802px;width:16px;height:16px"></div>
<div class="a" style="left:1904px;top:808px;width:0;height:0;border-left:4px solid transparent;border-right:4px solid transparent;border-bottom:4px solid #000"></div>
<div class="btn" style="left:1900px;top:821px;width:16px;height:151px"></div>
<div class="btn" style="left:1900px;top:976px;width:16px;height:16px"></div>
<div class="a" style="left:1904px;top:982px;width:0;height:0;border-left:4px solid transparent;border-right:4px solid transparent;border-top:4px solid #000"></div>
<div class="a" style="left:1916px;top:801px;width:1px;height:193px;background:#fff"></div>
<!-- I-beam cursor -->
<svg class="a" style="left:1890px;top:883px" width="12" height="20" viewBox="1890 883 12 20">
<path d="M1892.5,885.5 H1898 M1892.5,900.5 H1898 M1895.3,885.5 V900.5" stroke="#fff" stroke-width="3"/>
<path d="M1892.5,885.5 H1898 M1892.5,900.5 H1898 M1895.3,885.5 V900.5" stroke="#000" stroke-width="1.2"/>
</svg>
<!-- size grip -->
<svg class="a" style="left:1900px;top:1005px" width="18" height="18" viewBox="1900 1005 18 18">
<path d="M1917,1008 L1903,1022 M1917,1012 L1907,1022 M1917,1016 L1911,1022" stroke="#fff" stroke-width="1"/>
<path d="M1917,1009.5 L1904.5,1022 M1917,1013.5 L1908.5,1022 M1917,1017.5 L1912.5,1022" stroke="#808080" stroke-width="1.4"/>
</svg>
<!--/CHROME2-->
<!-- report view -->
<div class="a" style="left:2px;top:778px;width:1916px;height:2px;background:#000"></div>
<div class="a" style="left:4px;top:782px;white-space:nowrap">Report view</div>
<div class="a" style="left:2px;top:799px;width:1916px;height:1px;background:#808080"></div>
<div class="a" style="left:3px;top:800px;width:1915px;height:1px;background:#000"></div>
<div class="a" style="left:2px;top:799px;width:1px;height:196px;background:#808080"></div>
<div class="a" style="left:3px;top:800px;width:1px;height:194px;background:#000"></div>
<div class="a" style="left:4px;top:801px;width:1896px;height:192px;background:#fff"></div>
<div class="a rep" style="left:8px;top:802px">CadQuery 0.1.8
CadQuery is a parametric scripting language for creating and traversing CAD models
Author: David Cowden
License: LGPL
Website: https://github.com/dcowden/cadquery

Opened /usr/lib/freecad/Mod/CadQuery/Examples/Ex000_Introduction.py

Executed /usr/lib/freecad/Mod/CadQuery/Examples/Ex000_Introduction.py
Opened /home/jwright/Documents/Projects/Mach_30/yavin-thruster/trunk/chamber/hello_world_chamber.py

Executed /home/jwright/Documents/Projects/Mach_30/yavin-thruster/trunk/chamber/hello_world_chamber.py</div>
<div class="a" style="left:2px;top:994px;width:1916px;height:1px;background:#fff"></div>

<!-- status bar -->
<div class="a" style="left:2px;top:996px;width:124px;height:25px;border-top:1px solid #808080;border-left:1px solid #808080;border-right:1px solid #fff;border-bottom:1px solid #fff"></div>
<div class="a" style="left:1770px;top:997px;width:130px;height:24px;border-top:1px solid #808080;border-left:1px solid #808080;border-right:1px solid #fff;border-bottom:1px solid #fff"></div>
<div class="a" style="left:1772px;top:1002px;white-space:nowrap;font-size:13.7px">322.63 x 192.09 mm</div>
</body></html>
